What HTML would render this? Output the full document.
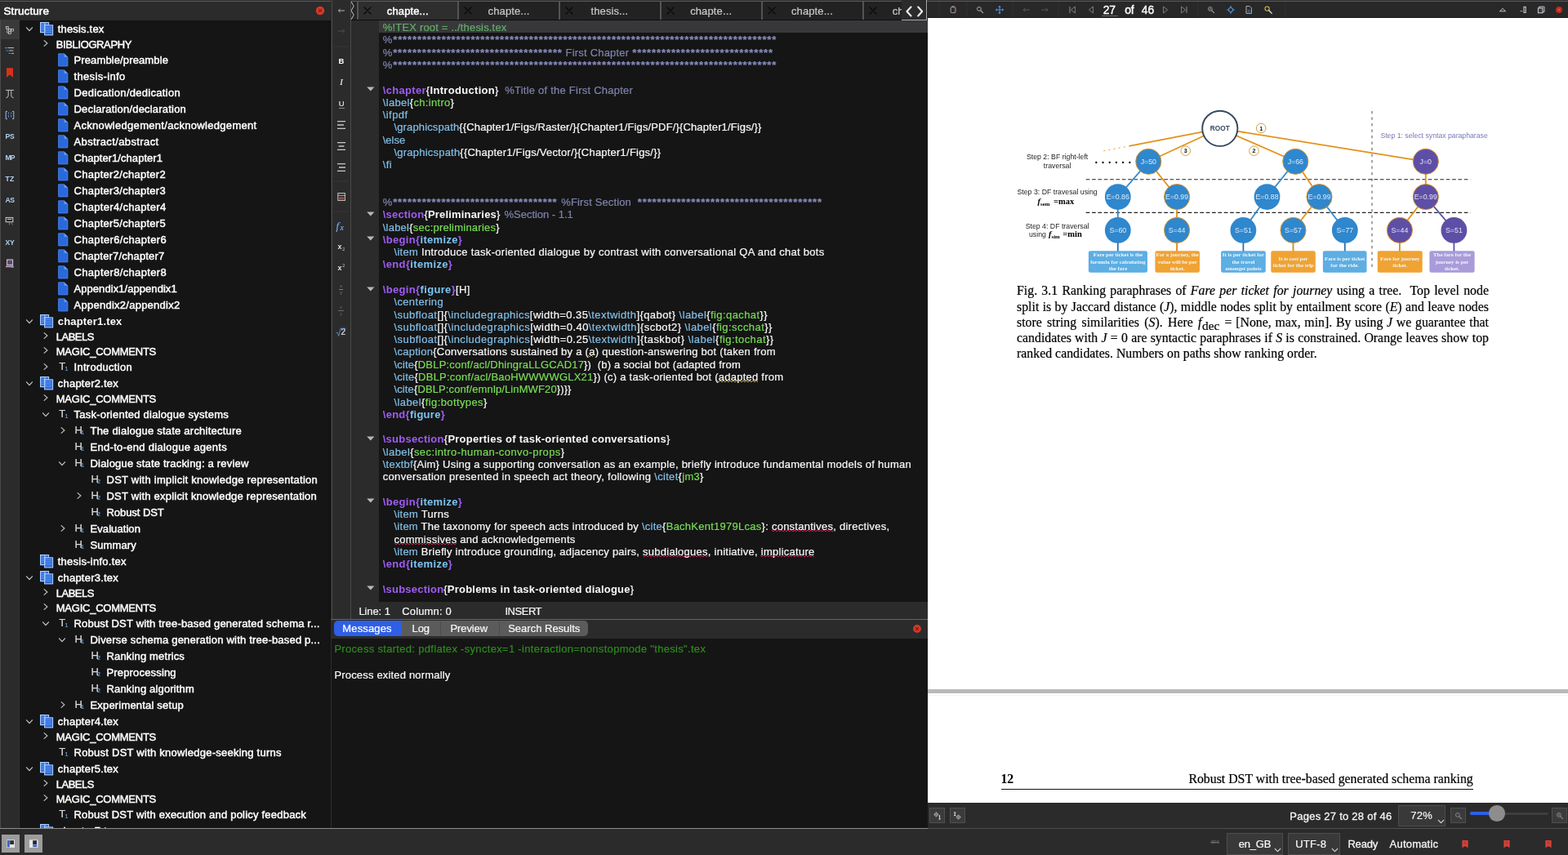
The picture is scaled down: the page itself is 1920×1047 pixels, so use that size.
<!DOCTYPE html>
<html lang="en"><head><meta charset="utf-8"><title>TeXstudio</title>
<style>
html,body{margin:0;padding:0;background:#2b2b2b;}
body{width:1920px;height:1047px;overflow:hidden;font-family:"Liberation Sans",sans-serif;font-size:13px;color:#ececec;}
#app{will-change:transform;position:relative;width:1920px;height:1047px;overflow:hidden;background:#2b2b2b;}
#app div,#app svg{position:absolute;box-sizing:border-box;}
.t{white-space:pre;color:#f8f8f8;-webkit-text-stroke:0.2px currentColor;}
.t span{position:static;}
.w{}
.wb,.b{font-weight:bold;-webkit-text-stroke:0;}
.dim{}
.mag{color:#62ad68;}
.com{color:#7e83ad;}
.kw{color:#9f5cf3;font-weight:bold;-webkit-text-stroke:0;}
.env{color:#7cc4f2;font-weight:bold;-webkit-text-stroke:0;}
.cmd{color:#82bfe8;}
.ref{color:#78dc55;}
.sqr{}
.sqy{}
.grn{color:#2d8c1d;}
.it{font-style:italic;}
.tb{font-weight:bold;}
.k{color:#000;}
.ksub{color:#141414;font-size:11.3px;position:relative !important;top:3.6px;}
.ast{color:#868bbd;font-weight:bold;}

</style></head>
<body>
<div id="app">
<div style="left:0px;top:1px;width:405px;height:23px;background:#2b2b2b;"></div>
<div class="t" style="left:4.50px;top:5.70px;line-height:16px;font-size:13.5px;letter-spacing:0.080px;color:#fff;-webkit-text-stroke:0.55px #fff;"><span class="w">Structure</span></div>
<svg style="left:386px;top:7px" width="12" height="12" viewBox="0 0 12 12"><circle cx="6" cy="6" r="5.2" fill="#d63a2c"/><path d="M4 4l4 4M8 4l-4 4" stroke="#8a1f16" stroke-width="1.2" fill="none"/></svg>
<div style="left:0px;top:24px;width:24px;height:990px;background:#2b2b2b;"></div>
<div style="left:1px;top:24px;width:23px;height:24px;background:#3a3a3a;"></div>
<div style="left:24px;top:25px;width:380.6px;height:989px;background:#151515;"></div>
<div style="left:402.8px;top:25px;width:1.8px;height:733px;background:#101010;"></div>
<div style="left:406px;top:1px;width:1px;height:757px;background:#4a4a4a;"></div>
<div style="left:407px;top:1px;width:22px;height:757px;background:#2b2b2b;"></div>
<div style="left:429px;top:1px;width:1px;height:757px;background:#4a4a4a;"></div>
<div style="left:430px;top:1px;width:706px;height:23px;background:#252525;"></div>
<div style="left:430px;top:24px;width:706px;height:1px;background:#0c0c0c;"></div>
<div style="left:430px;top:25px;width:34px;height:712px;background:#2b2b2b;"></div>
<div style="left:464px;top:25px;width:672px;height:712px;background:#151515;"></div>
<div style="left:464px;top:25px;width:672px;height:15.3px;background:#38383b;"></div>
<div style="left:430px;top:737px;width:706px;height:21px;background:#2b2b2b;"></div>
<div style="left:405px;top:758px;width:731px;height:1px;background:#666666;"></div>
<div style="left:405px;top:759px;width:731px;height:23px;background:#2b2b2b;"></div>
<div style="left:405px;top:782px;width:731px;height:232px;background:#151515;"></div>
<div style="left:404px;top:758px;width:1.2px;height:256px;background:#151515;"></div>
<div style="left:405.1px;top:782px;width:1.2px;height:232px;background:#2e2e2e;"></div>
<div style="left:1136px;top:2px;width:784px;height:20px;background:#282828;"></div>
<div style="left:1136px;top:20.6px;width:784px;height:1.4px;background:#1c1c1c;"></div>
<div style="left:1136px;top:22px;width:784px;height:961px;background:#ffffff;"></div>
<div style="left:1136px;top:844px;width:784px;height:5px;background:#b9b9b9;"></div>
<div style="left:1136px;top:851px;width:784px;height:1px;background:#f3f3f3;"></div>
<div style="left:1136px;top:983px;width:784px;height:31px;background:#2b2b2b;"></div>
<div style="left:0px;top:0px;width:1920px;height:1px;background:#2c2c2c;"></div>
<div style="left:0px;top:1px;width:405px;height:1px;background:#5c5c5c;"></div>
<div style="left:430px;top:1px;width:1490px;height:1px;background:#5c5c5c;"></div>
<div style="left:406px;top:0px;width:1px;height:2px;background:#4a4a4a;"></div>
<div style="left:0px;top:1014px;width:1920px;height:33px;background:#2b2b2b;"></div>
<div style="left:0px;top:1014px;width:1136px;height:1px;background:#8c8c8c;"></div>
<div style="left:1136px;top:1014px;width:784px;height:1px;background:#4e4e4e;"></div>
<div style="left:24px;top:25px;width:380px;height:989px;overflow:hidden"><div style="left:-24px;top:-25px;width:405px;height:1047px">
<svg style="left:29.799999999999997px;top:29.5px" width="12" height="12" viewBox="-6 -6 12 12"><path d="M-3.5 -2.2L0 1.6L3.5 -2.2" fill="none" stroke="#c4c4c4" stroke-width="1.25" stroke-linecap="round" stroke-linejoin="round"/></svg>
<svg style="left:48.6px;top:26.7px" width="17" height="17" viewBox="0 0 17 17"><rect x="0.6" y="0.6" width="10" height="12" fill="#2b67d9" stroke="#a9cdfc" stroke-width="1.1"/><path d="M2 3.5h7.5M2 5.5h7.5M2 7.5h7.5M2 9.5h7.5" stroke="#6aa0f0" stroke-width="0.8"/><rect x="5.6" y="3.9" width="10" height="12" fill="#2b67d9" stroke="#a9cdfc" stroke-width="1.1"/><path d="M7 6.5h7.4M7 8.5h7.4M7 10.5h7.4M7 12.5h7.4" stroke="#6aa0f0" stroke-width="0.8"/><rect x="0.6" y="0.6" width="5.3" height="12" fill="none" stroke="#a9cdfc" stroke-width="1.1"/></svg>
<div class="t" style="left:70.75px;top:25.60px;line-height:20px;font-size:13px;letter-spacing:0.183px;color:#fff;-webkit-text-stroke:0.45px #fff;"><span class="w">thesis.tex</span></div>
<svg style="left:50.2px;top:47.3px" width="12" height="12" viewBox="-6 -6 12 12"><path d="M-1.9 -3.4L1.9 0L-1.9 3.4" fill="none" stroke="#b8b8b8" stroke-width="1.25" stroke-linecap="round" stroke-linejoin="round"/></svg>
<div class="t" style="left:68.75px;top:45.60px;line-height:18px;font-size:13px;letter-spacing:-0.380px;color:#fff;-webkit-text-stroke:0.45px #fff;"><span class="w">BIBLIOGRAPHY</span></div>
<svg style="left:70.8px;top:64.8px" width="13" height="17" viewBox="0 0 13 17"><path d="M0.3 0.5H7.6L12.2 4.8V16.2H0.3Z" fill="#2a68db"/><path d="M7.6 0.5V4.8H12.2Z" fill="#6fa4f2"/><path d="M0.7 0.9H7.4L11.8 5V15.8H0.7Z" fill="none" stroke="#4b84e6" stroke-width="0.8"/></svg>
<div class="t" style="left:90.50px;top:63.60px;line-height:20px;font-size:13px;letter-spacing:0.120px;color:#fff;-webkit-text-stroke:0.45px #fff;"><span class="w">Preamble/preamble</span></div>
<svg style="left:70.8px;top:84.8px" width="13" height="17" viewBox="0 0 13 17"><path d="M0.3 0.5H7.6L12.2 4.8V16.2H0.3Z" fill="#2a68db"/><path d="M7.6 0.5V4.8H12.2Z" fill="#6fa4f2"/><path d="M0.7 0.9H7.4L11.8 5V15.8H0.7Z" fill="none" stroke="#4b84e6" stroke-width="0.8"/></svg>
<div class="t" style="left:90.50px;top:83.60px;line-height:20px;font-size:13px;letter-spacing:0.341px;color:#fff;-webkit-text-stroke:0.45px #fff;"><span class="w">thesis-info</span></div>
<svg style="left:70.8px;top:104.8px" width="13" height="17" viewBox="0 0 13 17"><path d="M0.3 0.5H7.6L12.2 4.8V16.2H0.3Z" fill="#2a68db"/><path d="M7.6 0.5V4.8H12.2Z" fill="#6fa4f2"/><path d="M0.7 0.9H7.4L11.8 5V15.8H0.7Z" fill="none" stroke="#4b84e6" stroke-width="0.8"/></svg>
<div class="t" style="left:90.50px;top:103.60px;line-height:20px;font-size:13px;letter-spacing:0.295px;color:#fff;-webkit-text-stroke:0.45px #fff;"><span class="w">Dedication/dedication</span></div>
<svg style="left:70.8px;top:124.8px" width="13" height="17" viewBox="0 0 13 17"><path d="M0.3 0.5H7.6L12.2 4.8V16.2H0.3Z" fill="#2a68db"/><path d="M7.6 0.5V4.8H12.2Z" fill="#6fa4f2"/><path d="M0.7 0.9H7.4L11.8 5V15.8H0.7Z" fill="none" stroke="#4b84e6" stroke-width="0.8"/></svg>
<div class="t" style="left:90.50px;top:123.60px;line-height:20px;font-size:13px;letter-spacing:0.197px;color:#fff;-webkit-text-stroke:0.45px #fff;"><span class="w">Declaration/declaration</span></div>
<svg style="left:70.8px;top:144.8px" width="13" height="17" viewBox="0 0 13 17"><path d="M0.3 0.5H7.6L12.2 4.8V16.2H0.3Z" fill="#2a68db"/><path d="M7.6 0.5V4.8H12.2Z" fill="#6fa4f2"/><path d="M0.7 0.9H7.4L11.8 5V15.8H0.7Z" fill="none" stroke="#4b84e6" stroke-width="0.8"/></svg>
<div class="t" style="left:90.50px;top:143.60px;line-height:20px;font-size:13px;letter-spacing:0.302px;color:#fff;-webkit-text-stroke:0.45px #fff;"><span class="w">Acknowledgement/acknowledgement</span></div>
<svg style="left:70.8px;top:164.8px" width="13" height="17" viewBox="0 0 13 17"><path d="M0.3 0.5H7.6L12.2 4.8V16.2H0.3Z" fill="#2a68db"/><path d="M7.6 0.5V4.8H12.2Z" fill="#6fa4f2"/><path d="M0.7 0.9H7.4L11.8 5V15.8H0.7Z" fill="none" stroke="#4b84e6" stroke-width="0.8"/></svg>
<div class="t" style="left:90.50px;top:163.60px;line-height:20px;font-size:13px;letter-spacing:0.380px;color:#fff;-webkit-text-stroke:0.45px #fff;"><span class="w">Abstract/abstract</span></div>
<svg style="left:70.8px;top:184.8px" width="13" height="17" viewBox="0 0 13 17"><path d="M0.3 0.5H7.6L12.2 4.8V16.2H0.3Z" fill="#2a68db"/><path d="M7.6 0.5V4.8H12.2Z" fill="#6fa4f2"/><path d="M0.7 0.9H7.4L11.8 5V15.8H0.7Z" fill="none" stroke="#4b84e6" stroke-width="0.8"/></svg>
<div class="t" style="left:90.50px;top:183.60px;line-height:20px;font-size:13px;letter-spacing:0.048px;color:#fff;-webkit-text-stroke:0.45px #fff;"><span class="w">Chapter1/chapter1</span></div>
<svg style="left:70.8px;top:204.8px" width="13" height="17" viewBox="0 0 13 17"><path d="M0.3 0.5H7.6L12.2 4.8V16.2H0.3Z" fill="#2a68db"/><path d="M7.6 0.5V4.8H12.2Z" fill="#6fa4f2"/><path d="M0.7 0.9H7.4L11.8 5V15.8H0.7Z" fill="none" stroke="#4b84e6" stroke-width="0.8"/></svg>
<div class="t" style="left:90.50px;top:203.60px;line-height:20px;font-size:13px;letter-spacing:0.283px;color:#fff;-webkit-text-stroke:0.45px #fff;"><span class="w">Chapter2/chapter2</span></div>
<svg style="left:70.8px;top:224.8px" width="13" height="17" viewBox="0 0 13 17"><path d="M0.3 0.5H7.6L12.2 4.8V16.2H0.3Z" fill="#2a68db"/><path d="M7.6 0.5V4.8H12.2Z" fill="#6fa4f2"/><path d="M0.7 0.9H7.4L11.8 5V15.8H0.7Z" fill="none" stroke="#4b84e6" stroke-width="0.8"/></svg>
<div class="t" style="left:90.50px;top:223.60px;line-height:20px;font-size:13px;letter-spacing:0.283px;color:#fff;-webkit-text-stroke:0.45px #fff;"><span class="w">Chapter3/chapter3</span></div>
<svg style="left:70.8px;top:244.8px" width="13" height="17" viewBox="0 0 13 17"><path d="M0.3 0.5H7.6L12.2 4.8V16.2H0.3Z" fill="#2a68db"/><path d="M7.6 0.5V4.8H12.2Z" fill="#6fa4f2"/><path d="M0.7 0.9H7.4L11.8 5V15.8H0.7Z" fill="none" stroke="#4b84e6" stroke-width="0.8"/></svg>
<div class="t" style="left:90.50px;top:243.60px;line-height:20px;font-size:13px;letter-spacing:0.312px;color:#fff;-webkit-text-stroke:0.45px #fff;"><span class="w">Chapter4/chapter4</span></div>
<svg style="left:70.8px;top:264.8px" width="13" height="17" viewBox="0 0 13 17"><path d="M0.3 0.5H7.6L12.2 4.8V16.2H0.3Z" fill="#2a68db"/><path d="M7.6 0.5V4.8H12.2Z" fill="#6fa4f2"/><path d="M0.7 0.9H7.4L11.8 5V15.8H0.7Z" fill="none" stroke="#4b84e6" stroke-width="0.8"/></svg>
<div class="t" style="left:90.50px;top:263.60px;line-height:20px;font-size:13px;letter-spacing:0.283px;color:#fff;-webkit-text-stroke:0.45px #fff;"><span class="w">Chapter5/chapter5</span></div>
<svg style="left:70.8px;top:284.8px" width="13" height="17" viewBox="0 0 13 17"><path d="M0.3 0.5H7.6L12.2 4.8V16.2H0.3Z" fill="#2a68db"/><path d="M7.6 0.5V4.8H12.2Z" fill="#6fa4f2"/><path d="M0.7 0.9H7.4L11.8 5V15.8H0.7Z" fill="none" stroke="#4b84e6" stroke-width="0.8"/></svg>
<div class="t" style="left:90.50px;top:283.60px;line-height:20px;font-size:13px;letter-spacing:0.342px;color:#fff;-webkit-text-stroke:0.45px #fff;"><span class="w">Chapter6/chapter6</span></div>
<svg style="left:70.8px;top:304.8px" width="13" height="17" viewBox="0 0 13 17"><path d="M0.3 0.5H7.6L12.2 4.8V16.2H0.3Z" fill="#2a68db"/><path d="M7.6 0.5V4.8H12.2Z" fill="#6fa4f2"/><path d="M0.7 0.9H7.4L11.8 5V15.8H0.7Z" fill="none" stroke="#4b84e6" stroke-width="0.8"/></svg>
<div class="t" style="left:90.50px;top:303.60px;line-height:20px;font-size:13px;letter-spacing:0.195px;color:#fff;-webkit-text-stroke:0.45px #fff;"><span class="w">Chapter7/chapter7</span></div>
<svg style="left:70.8px;top:324.8px" width="13" height="17" viewBox="0 0 13 17"><path d="M0.3 0.5H7.6L12.2 4.8V16.2H0.3Z" fill="#2a68db"/><path d="M7.6 0.5V4.8H12.2Z" fill="#6fa4f2"/><path d="M0.7 0.9H7.4L11.8 5V15.8H0.7Z" fill="none" stroke="#4b84e6" stroke-width="0.8"/></svg>
<div class="t" style="left:90.50px;top:323.60px;line-height:20px;font-size:13px;letter-spacing:0.342px;color:#fff;-webkit-text-stroke:0.45px #fff;"><span class="w">Chapter8/chapter8</span></div>
<svg style="left:70.8px;top:344.8px" width="13" height="17" viewBox="0 0 13 17"><path d="M0.3 0.5H7.6L12.2 4.8V16.2H0.3Z" fill="#2a68db"/><path d="M7.6 0.5V4.8H12.2Z" fill="#6fa4f2"/><path d="M0.7 0.9H7.4L11.8 5V15.8H0.7Z" fill="none" stroke="#4b84e6" stroke-width="0.8"/></svg>
<div class="t" style="left:90.50px;top:343.60px;line-height:20px;font-size:13px;letter-spacing:0.062px;color:#fff;-webkit-text-stroke:0.45px #fff;"><span class="w">Appendix1/appendix1</span></div>
<svg style="left:70.8px;top:364.8px" width="13" height="17" viewBox="0 0 13 17"><path d="M0.3 0.5H7.6L12.2 4.8V16.2H0.3Z" fill="#2a68db"/><path d="M7.6 0.5V4.8H12.2Z" fill="#6fa4f2"/><path d="M0.7 0.9H7.4L11.8 5V15.8H0.7Z" fill="none" stroke="#4b84e6" stroke-width="0.8"/></svg>
<div class="t" style="left:90.50px;top:363.60px;line-height:20px;font-size:13px;letter-spacing:0.260px;color:#fff;-webkit-text-stroke:0.45px #fff;"><span class="w">Appendix2/appendix2</span></div>
<svg style="left:29.799999999999997px;top:387.5px" width="12" height="12" viewBox="-6 -6 12 12"><path d="M-3.5 -2.2L0 1.6L3.5 -2.2" fill="none" stroke="#c4c4c4" stroke-width="1.25" stroke-linecap="round" stroke-linejoin="round"/></svg>
<svg style="left:48.6px;top:384.7px" width="17" height="17" viewBox="0 0 17 17"><rect x="0.6" y="0.6" width="10" height="12" fill="#2b67d9" stroke="#a9cdfc" stroke-width="1.1"/><path d="M2 3.5h7.5M2 5.5h7.5M2 7.5h7.5M2 9.5h7.5" stroke="#6aa0f0" stroke-width="0.8"/><rect x="5.6" y="3.9" width="10" height="12" fill="#2b67d9" stroke="#a9cdfc" stroke-width="1.1"/><path d="M7 6.5h7.4M7 8.5h7.4M7 10.5h7.4M7 12.5h7.4" stroke="#6aa0f0" stroke-width="0.8"/><rect x="0.6" y="0.6" width="5.3" height="12" fill="none" stroke="#a9cdfc" stroke-width="1.1"/></svg>
<div class="t" style="left:70.75px;top:383.60px;line-height:20px;font-size:13px;letter-spacing:0.180px;color:#fff;"><span class="wb">chapter1.tex</span></div>
<svg style="left:50.2px;top:405.3px" width="12" height="12" viewBox="-6 -6 12 12"><path d="M-1.9 -3.4L1.9 0L-1.9 3.4" fill="none" stroke="#b8b8b8" stroke-width="1.25" stroke-linecap="round" stroke-linejoin="round"/></svg>
<div class="t" style="left:68.75px;top:403.60px;line-height:18px;font-size:13px;letter-spacing:-0.484px;color:#fff;-webkit-text-stroke:0.45px #fff;"><span class="w">LABELS</span></div>
<svg style="left:50.2px;top:423.3px" width="12" height="12" viewBox="-6 -6 12 12"><path d="M-1.9 -3.4L1.9 0L-1.9 3.4" fill="none" stroke="#b8b8b8" stroke-width="1.25" stroke-linecap="round" stroke-linejoin="round"/></svg>
<div class="t" style="left:68.75px;top:421.60px;line-height:18px;font-size:13px;letter-spacing:-0.244px;color:#fff;-webkit-text-stroke:0.45px #fff;"><span class="w">MAGIC_COMMENTS</span></div>
<svg style="left:50.199999999999996px;top:443px" width="12" height="12" viewBox="-6 -6 12 12"><path d="M-1.9 -3.4L1.9 0L-1.9 3.4" fill="none" stroke="#b8b8b8" stroke-width="1.25" stroke-linecap="round" stroke-linejoin="round"/></svg>
<div class="t" style="left:72.20px;top:439.00px;line-height:20px;font-size:13px;color:#dcdcdc;"><span class="ic">T</span></div>
<div class="t" style="left:79.60px;top:447.20px;line-height:10px;font-size:7px;color:#6f9fd0;"><span class="ic">1</span></div>
<div class="t" style="left:90.50px;top:439.60px;line-height:20px;font-size:13px;letter-spacing:0.297px;color:#fff;-webkit-text-stroke:0.45px #fff;"><span class="w">Introduction</span></div>
<svg style="left:29.799999999999997px;top:463.5px" width="12" height="12" viewBox="-6 -6 12 12"><path d="M-3.5 -2.2L0 1.6L3.5 -2.2" fill="none" stroke="#c4c4c4" stroke-width="1.25" stroke-linecap="round" stroke-linejoin="round"/></svg>
<svg style="left:48.6px;top:460.7px" width="17" height="17" viewBox="0 0 17 17"><rect x="0.6" y="0.6" width="10" height="12" fill="#2b67d9" stroke="#a9cdfc" stroke-width="1.1"/><path d="M2 3.5h7.5M2 5.5h7.5M2 7.5h7.5M2 9.5h7.5" stroke="#6aa0f0" stroke-width="0.8"/><rect x="5.6" y="3.9" width="10" height="12" fill="#2b67d9" stroke="#a9cdfc" stroke-width="1.1"/><path d="M7 6.5h7.4M7 8.5h7.4M7 10.5h7.4M7 12.5h7.4" stroke="#6aa0f0" stroke-width="0.8"/><rect x="0.6" y="0.6" width="5.3" height="12" fill="none" stroke="#a9cdfc" stroke-width="1.1"/></svg>
<div class="t" style="left:70.75px;top:459.60px;line-height:20px;font-size:13px;letter-spacing:0.225px;color:#fff;-webkit-text-stroke:0.45px #fff;"><span class="w">chapter2.tex</span></div>
<svg style="left:50.2px;top:481.3px" width="12" height="12" viewBox="-6 -6 12 12"><path d="M-1.9 -3.4L1.9 0L-1.9 3.4" fill="none" stroke="#b8b8b8" stroke-width="1.25" stroke-linecap="round" stroke-linejoin="round"/></svg>
<div class="t" style="left:68.75px;top:479.60px;line-height:18px;font-size:13px;letter-spacing:-0.244px;color:#fff;-webkit-text-stroke:0.45px #fff;"><span class="w">MAGIC_COMMENTS</span></div>
<svg style="left:49.8px;top:501.5px" width="12" height="12" viewBox="-6 -6 12 12"><path d="M-3.5 -2.2L0 1.6L3.5 -2.2" fill="none" stroke="#c4c4c4" stroke-width="1.25" stroke-linecap="round" stroke-linejoin="round"/></svg>
<div class="t" style="left:72.20px;top:497.00px;line-height:20px;font-size:13px;color:#dcdcdc;"><span class="ic">T</span></div>
<div class="t" style="left:79.60px;top:505.20px;line-height:10px;font-size:7px;color:#6f9fd0;"><span class="ic">1</span></div>
<div class="t" style="left:90.50px;top:497.60px;line-height:20px;font-size:13px;letter-spacing:0.247px;color:#fff;-webkit-text-stroke:0.45px #fff;"><span class="w">Task-oriented dialogue systems</span></div>
<svg style="left:70.60000000000001px;top:521px" width="12" height="12" viewBox="-6 -6 12 12"><path d="M-1.9 -3.4L1.9 0L-1.9 3.4" fill="none" stroke="#b8b8b8" stroke-width="1.25" stroke-linecap="round" stroke-linejoin="round"/></svg>
<div class="t" style="left:91.60px;top:517.00px;line-height:20px;font-size:13px;color:#dcdcdc;"><span class="ic">H</span></div>
<div class="t" style="left:99.00px;top:525.20px;line-height:10px;font-size:7px;color:#6f9fd0;"><span class="ic">1</span></div>
<div class="t" style="left:110.50px;top:517.60px;line-height:20px;font-size:13px;letter-spacing:0.226px;color:#fff;-webkit-text-stroke:0.45px #fff;"><span class="w">The dialogue state architecture</span></div>
<div class="t" style="left:91.60px;top:537.00px;line-height:20px;font-size:13px;color:#dcdcdc;"><span class="ic">H</span></div>
<div class="t" style="left:99.00px;top:545.20px;line-height:10px;font-size:7px;color:#6f9fd0;"><span class="ic">1</span></div>
<div class="t" style="left:110.50px;top:537.60px;line-height:20px;font-size:13px;letter-spacing:0.299px;color:#fff;-webkit-text-stroke:0.45px #fff;"><span class="w">End-to-end dialogue agents</span></div>
<svg style="left:70.2px;top:561.5px" width="12" height="12" viewBox="-6 -6 12 12"><path d="M-3.5 -2.2L0 1.6L3.5 -2.2" fill="none" stroke="#c4c4c4" stroke-width="1.25" stroke-linecap="round" stroke-linejoin="round"/></svg>
<div class="t" style="left:91.60px;top:557.00px;line-height:20px;font-size:13px;color:#dcdcdc;"><span class="ic">H</span></div>
<div class="t" style="left:99.00px;top:565.20px;line-height:10px;font-size:7px;color:#6f9fd0;"><span class="ic">1</span></div>
<div class="t" style="left:110.50px;top:557.60px;line-height:20px;font-size:13px;letter-spacing:0.186px;color:#fff;-webkit-text-stroke:0.45px #fff;"><span class="w">Dialogue state tracking: a review</span></div>
<div class="t" style="left:111.60px;top:577.00px;line-height:20px;font-size:13px;color:#dcdcdc;"><span class="ic">H</span></div>
<div class="t" style="left:119.00px;top:585.20px;line-height:10px;font-size:7px;color:#6f9fd0;"><span class="ic">2</span></div>
<div class="t" style="left:130.50px;top:577.60px;line-height:20px;font-size:13px;letter-spacing:0.242px;color:#fff;-webkit-text-stroke:0.45px #fff;"><span class="w">DST with implicit knowledge representation</span></div>
<svg style="left:90.60000000000001px;top:601px" width="12" height="12" viewBox="-6 -6 12 12"><path d="M-1.9 -3.4L1.9 0L-1.9 3.4" fill="none" stroke="#b8b8b8" stroke-width="1.25" stroke-linecap="round" stroke-linejoin="round"/></svg>
<div class="t" style="left:111.60px;top:597.00px;line-height:20px;font-size:13px;color:#dcdcdc;"><span class="ic">H</span></div>
<div class="t" style="left:119.00px;top:605.20px;line-height:10px;font-size:7px;color:#6f9fd0;"><span class="ic">2</span></div>
<div class="t" style="left:130.50px;top:597.60px;line-height:20px;font-size:13px;letter-spacing:0.218px;color:#fff;-webkit-text-stroke:0.45px #fff;"><span class="w">DST with explicit knowledge representation</span></div>
<div class="t" style="left:111.60px;top:617.00px;line-height:20px;font-size:13px;color:#dcdcdc;"><span class="ic">H</span></div>
<div class="t" style="left:119.00px;top:625.20px;line-height:10px;font-size:7px;color:#6f9fd0;"><span class="ic">2</span></div>
<div class="t" style="left:130.50px;top:617.60px;line-height:20px;font-size:13px;letter-spacing:-0.056px;color:#fff;-webkit-text-stroke:0.45px #fff;"><span class="w">Robust DST</span></div>
<svg style="left:70.60000000000001px;top:641px" width="12" height="12" viewBox="-6 -6 12 12"><path d="M-1.9 -3.4L1.9 0L-1.9 3.4" fill="none" stroke="#b8b8b8" stroke-width="1.25" stroke-linecap="round" stroke-linejoin="round"/></svg>
<div class="t" style="left:91.60px;top:637.00px;line-height:20px;font-size:13px;color:#dcdcdc;"><span class="ic">H</span></div>
<div class="t" style="left:99.00px;top:645.20px;line-height:10px;font-size:7px;color:#6f9fd0;"><span class="ic">1</span></div>
<div class="t" style="left:110.50px;top:637.60px;line-height:20px;font-size:13px;letter-spacing:0.078px;color:#fff;-webkit-text-stroke:0.45px #fff;"><span class="w">Evaluation</span></div>
<div class="t" style="left:91.60px;top:657.00px;line-height:20px;font-size:13px;color:#dcdcdc;"><span class="ic">H</span></div>
<div class="t" style="left:99.00px;top:665.20px;line-height:10px;font-size:7px;color:#6f9fd0;"><span class="ic">1</span></div>
<div class="t" style="left:110.50px;top:657.60px;line-height:20px;font-size:13px;letter-spacing:0.089px;color:#fff;-webkit-text-stroke:0.45px #fff;"><span class="w">Summary</span></div>
<svg style="left:48.6px;top:678.7px" width="17" height="17" viewBox="0 0 17 17"><rect x="0.6" y="0.6" width="10" height="12" fill="#2b67d9" stroke="#a9cdfc" stroke-width="1.1"/><path d="M2 3.5h7.5M2 5.5h7.5M2 7.5h7.5M2 9.5h7.5" stroke="#6aa0f0" stroke-width="0.8"/><rect x="5.6" y="3.9" width="10" height="12" fill="#2b67d9" stroke="#a9cdfc" stroke-width="1.1"/><path d="M7 6.5h7.4M7 8.5h7.4M7 10.5h7.4M7 12.5h7.4" stroke="#6aa0f0" stroke-width="0.8"/><rect x="0.6" y="0.6" width="5.3" height="12" fill="none" stroke="#a9cdfc" stroke-width="1.1"/></svg>
<div class="t" style="left:70.75px;top:677.60px;line-height:20px;font-size:13px;letter-spacing:0.253px;color:#fff;-webkit-text-stroke:0.45px #fff;"><span class="w">thesis-info.tex</span></div>
<svg style="left:29.799999999999997px;top:701.5px" width="12" height="12" viewBox="-6 -6 12 12"><path d="M-3.5 -2.2L0 1.6L3.5 -2.2" fill="none" stroke="#c4c4c4" stroke-width="1.25" stroke-linecap="round" stroke-linejoin="round"/></svg>
<svg style="left:48.6px;top:698.7px" width="17" height="17" viewBox="0 0 17 17"><rect x="0.6" y="0.6" width="10" height="12" fill="#2b67d9" stroke="#a9cdfc" stroke-width="1.1"/><path d="M2 3.5h7.5M2 5.5h7.5M2 7.5h7.5M2 9.5h7.5" stroke="#6aa0f0" stroke-width="0.8"/><rect x="5.6" y="3.9" width="10" height="12" fill="#2b67d9" stroke="#a9cdfc" stroke-width="1.1"/><path d="M7 6.5h7.4M7 8.5h7.4M7 10.5h7.4M7 12.5h7.4" stroke="#6aa0f0" stroke-width="0.8"/><rect x="0.6" y="0.6" width="5.3" height="12" fill="none" stroke="#a9cdfc" stroke-width="1.1"/></svg>
<div class="t" style="left:70.75px;top:697.60px;line-height:20px;font-size:13px;letter-spacing:0.225px;color:#fff;-webkit-text-stroke:0.45px #fff;"><span class="w">chapter3.tex</span></div>
<svg style="left:50.2px;top:719.3px" width="12" height="12" viewBox="-6 -6 12 12"><path d="M-1.9 -3.4L1.9 0L-1.9 3.4" fill="none" stroke="#b8b8b8" stroke-width="1.25" stroke-linecap="round" stroke-linejoin="round"/></svg>
<div class="t" style="left:68.75px;top:717.60px;line-height:18px;font-size:13px;letter-spacing:-0.484px;color:#fff;-webkit-text-stroke:0.45px #fff;"><span class="w">LABELS</span></div>
<svg style="left:50.2px;top:737.3px" width="12" height="12" viewBox="-6 -6 12 12"><path d="M-1.9 -3.4L1.9 0L-1.9 3.4" fill="none" stroke="#b8b8b8" stroke-width="1.25" stroke-linecap="round" stroke-linejoin="round"/></svg>
<div class="t" style="left:68.75px;top:735.60px;line-height:18px;font-size:13px;letter-spacing:-0.244px;color:#fff;-webkit-text-stroke:0.45px #fff;"><span class="w">MAGIC_COMMENTS</span></div>
<svg style="left:49.8px;top:757.5px" width="12" height="12" viewBox="-6 -6 12 12"><path d="M-3.5 -2.2L0 1.6L3.5 -2.2" fill="none" stroke="#c4c4c4" stroke-width="1.25" stroke-linecap="round" stroke-linejoin="round"/></svg>
<div class="t" style="left:72.20px;top:753.00px;line-height:20px;font-size:13px;color:#dcdcdc;"><span class="ic">T</span></div>
<div class="t" style="left:79.60px;top:761.20px;line-height:10px;font-size:7px;color:#6f9fd0;"><span class="ic">1</span></div>
<div class="t" style="left:90.50px;top:753.60px;line-height:20px;font-size:13px;letter-spacing:0.179px;color:#fff;-webkit-text-stroke:0.45px #fff;"><span class="w">Robust DST with tree-based generated schema r...</span></div>
<svg style="left:70.2px;top:777.5px" width="12" height="12" viewBox="-6 -6 12 12"><path d="M-3.5 -2.2L0 1.6L3.5 -2.2" fill="none" stroke="#c4c4c4" stroke-width="1.25" stroke-linecap="round" stroke-linejoin="round"/></svg>
<div class="t" style="left:91.60px;top:773.00px;line-height:20px;font-size:13px;color:#dcdcdc;"><span class="ic">H</span></div>
<div class="t" style="left:99.00px;top:781.20px;line-height:10px;font-size:7px;color:#6f9fd0;"><span class="ic">1</span></div>
<div class="t" style="left:110.50px;top:773.60px;line-height:20px;font-size:13px;letter-spacing:0.197px;color:#fff;-webkit-text-stroke:0.45px #fff;"><span class="w">Diverse schema generation with tree-based p...</span></div>
<div class="t" style="left:111.60px;top:793.00px;line-height:20px;font-size:13px;color:#dcdcdc;"><span class="ic">H</span></div>
<div class="t" style="left:119.00px;top:801.20px;line-height:10px;font-size:7px;color:#6f9fd0;"><span class="ic">2</span></div>
<div class="t" style="left:130.50px;top:793.60px;line-height:20px;font-size:13px;letter-spacing:0.153px;color:#fff;-webkit-text-stroke:0.45px #fff;"><span class="w">Ranking metrics</span></div>
<div class="t" style="left:111.60px;top:813.00px;line-height:20px;font-size:13px;color:#dcdcdc;"><span class="ic">H</span></div>
<div class="t" style="left:119.00px;top:821.20px;line-height:10px;font-size:7px;color:#6f9fd0;"><span class="ic">2</span></div>
<div class="t" style="left:130.50px;top:813.60px;line-height:20px;font-size:13px;letter-spacing:0.165px;color:#fff;-webkit-text-stroke:0.45px #fff;"><span class="w">Preprocessing</span></div>
<div class="t" style="left:111.60px;top:833.00px;line-height:20px;font-size:13px;color:#dcdcdc;"><span class="ic">H</span></div>
<div class="t" style="left:119.00px;top:841.20px;line-height:10px;font-size:7px;color:#6f9fd0;"><span class="ic">2</span></div>
<div class="t" style="left:130.50px;top:833.60px;line-height:20px;font-size:13px;letter-spacing:0.160px;color:#fff;-webkit-text-stroke:0.45px #fff;"><span class="w">Ranking algorithm</span></div>
<svg style="left:70.60000000000001px;top:857px" width="12" height="12" viewBox="-6 -6 12 12"><path d="M-1.9 -3.4L1.9 0L-1.9 3.4" fill="none" stroke="#b8b8b8" stroke-width="1.25" stroke-linecap="round" stroke-linejoin="round"/></svg>
<div class="t" style="left:91.60px;top:853.00px;line-height:20px;font-size:13px;color:#dcdcdc;"><span class="ic">H</span></div>
<div class="t" style="left:99.00px;top:861.20px;line-height:10px;font-size:7px;color:#6f9fd0;"><span class="ic">1</span></div>
<div class="t" style="left:110.50px;top:853.60px;line-height:20px;font-size:13px;letter-spacing:0.179px;color:#fff;-webkit-text-stroke:0.45px #fff;"><span class="w">Experimental setup</span></div>
<svg style="left:29.799999999999997px;top:877.5px" width="12" height="12" viewBox="-6 -6 12 12"><path d="M-3.5 -2.2L0 1.6L3.5 -2.2" fill="none" stroke="#c4c4c4" stroke-width="1.25" stroke-linecap="round" stroke-linejoin="round"/></svg>
<svg style="left:48.6px;top:874.7px" width="17" height="17" viewBox="0 0 17 17"><rect x="0.6" y="0.6" width="10" height="12" fill="#2b67d9" stroke="#a9cdfc" stroke-width="1.1"/><path d="M2 3.5h7.5M2 5.5h7.5M2 7.5h7.5M2 9.5h7.5" stroke="#6aa0f0" stroke-width="0.8"/><rect x="5.6" y="3.9" width="10" height="12" fill="#2b67d9" stroke="#a9cdfc" stroke-width="1.1"/><path d="M7 6.5h7.4M7 8.5h7.4M7 10.5h7.4M7 12.5h7.4" stroke="#6aa0f0" stroke-width="0.8"/><rect x="0.6" y="0.6" width="5.3" height="12" fill="none" stroke="#a9cdfc" stroke-width="1.1"/></svg>
<div class="t" style="left:70.75px;top:873.60px;line-height:20px;font-size:13px;letter-spacing:0.225px;color:#fff;-webkit-text-stroke:0.45px #fff;"><span class="w">chapter4.tex</span></div>
<svg style="left:50.2px;top:895.3px" width="12" height="12" viewBox="-6 -6 12 12"><path d="M-1.9 -3.4L1.9 0L-1.9 3.4" fill="none" stroke="#b8b8b8" stroke-width="1.25" stroke-linecap="round" stroke-linejoin="round"/></svg>
<div class="t" style="left:68.75px;top:893.60px;line-height:18px;font-size:13px;letter-spacing:-0.244px;color:#fff;-webkit-text-stroke:0.45px #fff;"><span class="w">MAGIC_COMMENTS</span></div>
<div class="t" style="left:72.20px;top:911.00px;line-height:20px;font-size:13px;color:#dcdcdc;"><span class="ic">T</span></div>
<div class="t" style="left:79.60px;top:919.20px;line-height:10px;font-size:7px;color:#6f9fd0;"><span class="ic">1</span></div>
<div class="t" style="left:90.50px;top:911.60px;line-height:20px;font-size:13px;letter-spacing:0.244px;color:#fff;-webkit-text-stroke:0.45px #fff;"><span class="w">Robust DST with knowledge-seeking turns</span></div>
<svg style="left:29.799999999999997px;top:935.5px" width="12" height="12" viewBox="-6 -6 12 12"><path d="M-3.5 -2.2L0 1.6L3.5 -2.2" fill="none" stroke="#c4c4c4" stroke-width="1.25" stroke-linecap="round" stroke-linejoin="round"/></svg>
<svg style="left:48.6px;top:932.7px" width="17" height="17" viewBox="0 0 17 17"><rect x="0.6" y="0.6" width="10" height="12" fill="#2b67d9" stroke="#a9cdfc" stroke-width="1.1"/><path d="M2 3.5h7.5M2 5.5h7.5M2 7.5h7.5M2 9.5h7.5" stroke="#6aa0f0" stroke-width="0.8"/><rect x="5.6" y="3.9" width="10" height="12" fill="#2b67d9" stroke="#a9cdfc" stroke-width="1.1"/><path d="M7 6.5h7.4M7 8.5h7.4M7 10.5h7.4M7 12.5h7.4" stroke="#6aa0f0" stroke-width="0.8"/><rect x="0.6" y="0.6" width="5.3" height="12" fill="none" stroke="#a9cdfc" stroke-width="1.1"/></svg>
<div class="t" style="left:70.75px;top:931.60px;line-height:20px;font-size:13px;letter-spacing:0.225px;color:#fff;-webkit-text-stroke:0.45px #fff;"><span class="w">chapter5.tex</span></div>
<svg style="left:50.2px;top:953.3px" width="12" height="12" viewBox="-6 -6 12 12"><path d="M-1.9 -3.4L1.9 0L-1.9 3.4" fill="none" stroke="#b8b8b8" stroke-width="1.25" stroke-linecap="round" stroke-linejoin="round"/></svg>
<div class="t" style="left:68.75px;top:951.60px;line-height:18px;font-size:13px;letter-spacing:-0.484px;color:#fff;-webkit-text-stroke:0.45px #fff;"><span class="w">LABELS</span></div>
<svg style="left:50.2px;top:971.3px" width="12" height="12" viewBox="-6 -6 12 12"><path d="M-1.9 -3.4L1.9 0L-1.9 3.4" fill="none" stroke="#b8b8b8" stroke-width="1.25" stroke-linecap="round" stroke-linejoin="round"/></svg>
<div class="t" style="left:68.75px;top:969.60px;line-height:18px;font-size:13px;letter-spacing:-0.244px;color:#fff;-webkit-text-stroke:0.45px #fff;"><span class="w">MAGIC_COMMENTS</span></div>
<div class="t" style="left:72.20px;top:987.00px;line-height:20px;font-size:13px;color:#dcdcdc;"><span class="ic">T</span></div>
<div class="t" style="left:79.60px;top:995.20px;line-height:10px;font-size:7px;color:#6f9fd0;"><span class="ic">1</span></div>
<div class="t" style="left:90.50px;top:987.60px;line-height:20px;font-size:13px;letter-spacing:0.209px;color:#fff;-webkit-text-stroke:0.45px #fff;"><span class="w">Robust DST with execution and policy feedback</span></div>
<svg style="left:29.799999999999997px;top:1011.5px" width="12" height="12" viewBox="-6 -6 12 12"><path d="M-3.5 -2.2L0 1.6L3.5 -2.2" fill="none" stroke="#c4c4c4" stroke-width="1.25" stroke-linecap="round" stroke-linejoin="round"/></svg>
<svg style="left:48.6px;top:1008.7px" width="17" height="17" viewBox="0 0 17 17"><rect x="0.6" y="0.6" width="10" height="12" fill="#2b67d9" stroke="#a9cdfc" stroke-width="1.1"/><path d="M2 3.5h7.5M2 5.5h7.5M2 7.5h7.5M2 9.5h7.5" stroke="#6aa0f0" stroke-width="0.8"/><rect x="5.6" y="3.9" width="10" height="12" fill="#2b67d9" stroke="#a9cdfc" stroke-width="1.1"/><path d="M7 6.5h7.4M7 8.5h7.4M7 10.5h7.4M7 12.5h7.4" stroke="#6aa0f0" stroke-width="0.8"/><rect x="0.6" y="0.6" width="5.3" height="12" fill="none" stroke="#a9cdfc" stroke-width="1.1"/></svg>
<div class="t" style="left:70.75px;top:1007.60px;line-height:20px;font-size:13px;letter-spacing:0.225px;color:#fff;-webkit-text-stroke:0.45px #fff;"><span class="w">chapter7.tex</span></div>
</div></div>
<div class="t" style="left:468.75px;top:26.20px;line-height:16px;font-size:13px;letter-spacing:0.181px;"><span class="mag">%!TEX root = ../thesis.tex</span></div>
<div class="t" style="left:468.75px;top:41.48px;line-height:16px;font-size:13px;letter-spacing:0.891px;"><span class="com">%</span><span class="ast">*******************************************************************************</span></div>
<div class="t" style="left:468.75px;top:56.76px;line-height:16px;font-size:13px;letter-spacing:0.871px;"><span class="com">%</span><span class="ast">***********************************</span></div>
<div class="t" style="left:692.60px;top:56.76px;line-height:16px;font-size:13px;letter-spacing:0.197px;"><span class="com">First Chapter</span></div>
<div class="t" style="left:774.25px;top:56.76px;line-height:16px;font-size:13px;letter-spacing:0.898px;"><span class="ast">*****************************</span></div>
<div class="t" style="left:468.75px;top:72.03px;line-height:16px;font-size:13px;letter-spacing:0.891px;"><span class="com">%</span><span class="ast">*******************************************************************************</span></div>
<div class="t" style="left:468.75px;top:102.59px;line-height:16px;font-size:13px;letter-spacing:0.314px;"><span class="kw">\chapter</span><span class="w">{</span><span class="b">Introduction</span><span class="w">}</span></div>
<div class="t" style="left:618.25px;top:102.59px;line-height:16px;font-size:13px;letter-spacing:0.231px;"><span class="com">%Title of the First Chapter</span></div>
<div class="t" style="left:468.75px;top:117.87px;line-height:16px;font-size:13px;letter-spacing:0.318px;"><span class="cmd">\label</span><span class="w">{</span><span class="ref">ch:intro</span><span class="w">}</span></div>
<div class="t" style="left:468.75px;top:133.15px;line-height:16px;font-size:13px;letter-spacing:0.427px;"><span class="cmd">\ifpdf</span></div>
<div class="t" style="left:482.50px;top:148.42px;line-height:16px;font-size:13px;letter-spacing:0.134px;"><span class="cmd">\graphicspath</span><span class="w">{{Chapter1/Figs/Raster/}{Chapter1/Figs/PDF/}{Chapter1/Figs/}}</span></div>
<div class="t" style="left:468.75px;top:163.70px;line-height:16px;font-size:13px;letter-spacing:0.006px;"><span class="cmd">\else</span></div>
<div class="t" style="left:482.50px;top:178.98px;line-height:16px;font-size:13px;letter-spacing:0.216px;"><span class="cmd">\graphicspath</span><span class="w">{{Chapter1/Figs/Vector/}{Chapter1/Figs/}}</span></div>
<div class="t" style="left:468.75px;top:194.26px;line-height:16px;font-size:13px;letter-spacing:0.375px;"><span class="cmd">\fi</span></div>
<div class="t" style="left:468.75px;top:240.09px;line-height:16px;font-size:13px;letter-spacing:0.862px;"><span class="com">%</span><span class="ast">**********************************</span></div>
<div class="t" style="left:687.30px;top:240.09px;line-height:16px;font-size:13px;letter-spacing:0.135px;"><span class="com">%First Section</span></div>
<div class="t" style="left:780.75px;top:240.09px;line-height:16px;font-size:13px;letter-spacing:0.895px;"><span class="ast">**************************************</span></div>
<div class="t" style="left:468.75px;top:255.37px;line-height:16px;font-size:13px;letter-spacing:0.186px;"><span class="kw">\section</span><span class="w">{</span><span class="b">Preliminaries</span><span class="w">}</span></div>
<div class="t" style="left:617.50px;top:255.37px;line-height:16px;font-size:13px;letter-spacing:-0.021px;"><span class="com">%Section - 1.1</span></div>
<div class="t" style="left:468.75px;top:270.65px;line-height:16px;font-size:13px;letter-spacing:0.228px;"><span class="cmd">\label</span><span class="w">{</span><span class="ref">sec:preliminaries</span><span class="w">}</span></div>
<div class="t" style="left:468.75px;top:285.93px;line-height:16px;font-size:13px;letter-spacing:0.334px;"><span class="kw">\begin{</span><span class="env">itemize</span><span class="kw">}</span></div>
<div class="t" style="left:482.50px;top:301.20px;line-height:16px;font-size:13px;letter-spacing:0.285px;"><span class="cmd">\item</span><span class="w"> Introduce task-oriented dialogue by contrast with conversational QA and chat bots</span></div>
<div class="t" style="left:468.75px;top:316.48px;line-height:16px;font-size:13px;letter-spacing:0.351px;"><span class="kw">\end{</span><span class="env">itemize</span><span class="kw">}</span></div>
<div class="t" style="left:468.75px;top:347.04px;line-height:16px;font-size:13px;letter-spacing:0.344px;"><span class="kw">\begin{</span><span class="env">figure</span><span class="kw">}</span><span class="w">[H]</span></div>
<div class="t" style="left:482.50px;top:362.32px;line-height:16px;font-size:13px;letter-spacing:0.341px;"><span class="cmd">\centering</span></div>
<div class="t" style="left:482.50px;top:377.59px;line-height:16px;font-size:13px;letter-spacing:0.417px;"><span class="cmd">\subfloat</span><span class="w">[]{</span><span class="cmd">\includegraphics</span><span class="w">[width=0.35</span><span class="cmd">\textwidth</span><span class="w">]{qabot} </span><span class="cmd">\label</span><span class="w">{</span><span class="ref">fig:qachat</span><span class="w">}}</span></div>
<div class="t" style="left:482.50px;top:392.87px;line-height:16px;font-size:13px;letter-spacing:0.430px;"><span class="cmd">\subfloat</span><span class="w">[]{</span><span class="cmd">\includegraphics</span><span class="w">[width=0.40</span><span class="cmd">\textwidth</span><span class="w">]{scbot2} </span><span class="cmd">\label</span><span class="w">{</span><span class="ref">fig:scchat</span><span class="w">}}</span></div>
<div class="t" style="left:482.50px;top:408.15px;line-height:16px;font-size:13px;letter-spacing:0.428px;"><span class="cmd">\subfloat</span><span class="w">[]{</span><span class="cmd">\includegraphics</span><span class="w">[width=0.25</span><span class="cmd">\textwidth</span><span class="w">]{taskbot} </span><span class="cmd">\label</span><span class="w">{</span><span class="ref">fig:tochat</span><span class="w">}}</span></div>
<div class="t" style="left:482.50px;top:423.43px;line-height:16px;font-size:13px;letter-spacing:0.265px;"><span class="cmd">\caption</span><span class="w">{Conversations sustained by a (</span><span class="w sqy">a</span><span class="w">) question-answering bot (taken from</span></div>
<div class="t" style="left:482.50px;top:438.71px;line-height:16px;font-size:13px;letter-spacing:0.183px;"><span class="cmd">\cite</span><span class="w">{</span><span class="ref">DBLP:conf/acl/DhingraLLGCAD17</span><span class="w">})  (b) a social bot (adapted from</span></div>
<div class="t" style="left:482.50px;top:453.98px;line-height:16px;font-size:13px;letter-spacing:0.236px;"><span class="cmd">\cite</span><span class="w">{</span><span class="ref">DBLP:conf/acl/BaoHWWWWGLX21</span><span class="w">}) (c) a task-oriented bot (</span><span class="w sqy">adapted</span><span class="w"> from</span></div>
<div class="t" style="left:482.50px;top:469.26px;line-height:16px;font-size:13px;letter-spacing:0.113px;"><span class="cmd">\cite</span><span class="w">{</span><span class="ref">DBLP:conf/emnlp/LinMWF20</span><span class="w">})}}</span></div>
<div class="t" style="left:482.50px;top:484.54px;line-height:16px;font-size:13px;letter-spacing:0.399px;"><span class="cmd">\label</span><span class="w">{</span><span class="ref">fig:bottypes</span><span class="w">}</span></div>
<div class="t" style="left:468.75px;top:499.82px;line-height:16px;font-size:13px;letter-spacing:0.272px;"><span class="kw">\end{</span><span class="env">figure</span><span class="kw">}</span></div>
<div class="t" style="left:468.75px;top:530.37px;line-height:16px;font-size:13px;letter-spacing:0.252px;"><span class="kw">\subsection</span><span class="w">{</span><span class="b">Properties of task-oriented conversations</span><span class="w">}</span></div>
<div class="t" style="left:468.75px;top:545.65px;line-height:16px;font-size:13px;letter-spacing:0.397px;"><span class="cmd">\label</span><span class="w">{</span><span class="ref">sec:intro-human-convo-props</span><span class="w">}</span></div>
<div class="t" style="left:468.75px;top:560.93px;line-height:16px;font-size:13px;letter-spacing:0.245px;"><span class="cmd">\textbf</span><span class="w">{Aim} Using a supporting conversation as an example, briefly introduce fundamental models of human</span></div>
<div class="t" style="left:468.75px;top:576.21px;line-height:16px;font-size:13px;letter-spacing:0.308px;"><span class="w">conversation presented in speech act theory, following </span><span class="cmd">\citet</span><span class="w">{</span><span class="ref">jm3</span><span class="w">}</span></div>
<div class="t" style="left:468.75px;top:606.76px;line-height:16px;font-size:13px;letter-spacing:0.334px;"><span class="kw">\begin{</span><span class="env">itemize</span><span class="kw">}</span></div>
<div class="t" style="left:482.50px;top:622.04px;line-height:16px;font-size:13px;letter-spacing:0.291px;"><span class="cmd">\item</span><span class="w"> Turns</span></div>
<div class="t" style="left:482.50px;top:637.32px;line-height:16px;font-size:13px;letter-spacing:0.255px;"><span class="cmd">\item</span><span class="w"> The taxonomy for speech acts introduced by </span><span class="cmd">\cite</span><span class="w">{</span><span class="ref">BachKent1979Lcas</span><span class="w">}: </span><span class="w sqr">constantives</span><span class="w">, directives,</span></div>
<div class="t" style="left:482.50px;top:652.60px;line-height:16px;font-size:13px;letter-spacing:0.231px;"><span class="w sqr">commissives</span><span class="w"> and acknowledgements</span></div>
<div class="t" style="left:482.50px;top:667.88px;line-height:16px;font-size:13px;letter-spacing:0.257px;"><span class="cmd">\item</span><span class="w"> Briefly introduce grounding, adjacency pairs, </span><span class="w sqr">subdialogues</span><span class="w">, initiative, </span><span class="w sqr">implicature</span></div>
<div class="t" style="left:468.75px;top:683.15px;line-height:16px;font-size:13px;letter-spacing:0.351px;"><span class="kw">\end{</span><span class="env">itemize</span><span class="kw">}</span></div>
<div class="t" style="left:468.75px;top:713.71px;line-height:16px;font-size:13px;letter-spacing:0.209px;"><span class="kw">\subsection</span><span class="w">{</span><span class="b">Problems in task-oriented dialogue</span><span class="w">}</span></div>
<svg style="left:448px;top:105.09px" width="12" height="8" viewBox="0 0 12 8"><path d="M1.2 1.6H10.4L5.8 6.6Z" fill="#b9b9b9"/></svg>
<svg style="left:448px;top:257.87px" width="12" height="8" viewBox="0 0 12 8"><path d="M1.2 1.6H10.4L5.8 6.6Z" fill="#b9b9b9"/></svg>
<svg style="left:448px;top:288.43px" width="12" height="8" viewBox="0 0 12 8"><path d="M1.2 1.6H10.4L5.8 6.6Z" fill="#b9b9b9"/></svg>
<svg style="left:448px;top:349.54px" width="12" height="8" viewBox="0 0 12 8"><path d="M1.2 1.6H10.4L5.8 6.6Z" fill="#b9b9b9"/></svg>
<svg style="left:448px;top:532.87px" width="12" height="8" viewBox="0 0 12 8"><path d="M1.2 1.6H10.4L5.8 6.6Z" fill="#b9b9b9"/></svg>
<svg style="left:448px;top:609.26px" width="12" height="8" viewBox="0 0 12 8"><path d="M1.2 1.6H10.4L5.8 6.6Z" fill="#b9b9b9"/></svg>
<svg style="left:448px;top:716.21px" width="12" height="8" viewBox="0 0 12 8"><path d="M1.2 1.6H10.4L5.8 6.6Z" fill="#b9b9b9"/></svg>
<div class="t" style="left:439.40px;top:740.90px;line-height:16px;font-size:13px;letter-spacing:-0.092px;"><span class="w">Line: 1</span></div>
<div class="t" style="left:492.30px;top:740.90px;line-height:16px;font-size:13px;letter-spacing:0.139px;"><span class="w">Column: 0</span></div>
<div class="t" style="left:618.50px;top:740.90px;line-height:16px;font-size:13px;letter-spacing:-0.490px;"><span class="w">INSERT</span></div>
<div style="left:430px;top:1px;width:674px;height:23px;overflow:hidden"><div style="left:-430px;top:-1px;width:1136px;height:24px">
<div style="left:437.4px;top:2px;width:124px;height:22px;background:#2e2e2e;"></div>
<div style="left:436.59999999999997px;top:2px;width:2px;height:22px;background:#545454;"></div>
<svg style="left:444.6px;top:7.800000000000001px" width="10" height="10" viewBox="-5 -5 10 10"><path d="M-4 -4L4 4M4 -4L-4 4" stroke="#0a0a0a" stroke-width="1.4" stroke-linecap="round"/></svg>
<div class="t" style="left:473.80px;top:6.30px;line-height:16px;font-size:13px;letter-spacing:0.125px;color:#fff;-webkit-text-stroke:0.45px #fff;"><span class="w">chapte...</span></div>
<div style="left:561.18px;top:2px;width:124px;height:22px;background:#222222;"></div>
<div style="left:560.38px;top:2px;width:2px;height:22px;background:#545454;"></div>
<svg style="left:568.4px;top:7.800000000000001px" width="10" height="10" viewBox="-5 -5 10 10"><path d="M-4 -4L4 4M4 -4L-4 4" stroke="#0a0a0a" stroke-width="1.4" stroke-linecap="round"/></svg>
<div class="t" style="left:597.58px;top:6.30px;line-height:16px;font-size:13px;letter-spacing:0.125px;color:#c9c9c9;"><span class="w">chapte...</span></div>
<div style="left:684.96px;top:2px;width:124px;height:22px;background:#222222;"></div>
<div style="left:684.1600000000001px;top:2px;width:2px;height:22px;background:#545454;"></div>
<svg style="left:692.2px;top:7.800000000000001px" width="10" height="10" viewBox="-5 -5 10 10"><path d="M-4 -4L4 4M4 -4L-4 4" stroke="#0a0a0a" stroke-width="1.4" stroke-linecap="round"/></svg>
<div class="t" style="left:723.56px;top:6.30px;line-height:16px;font-size:13px;letter-spacing:0.089px;color:#c9c9c9;"><span class="w">thesis...</span></div>
<div style="left:808.74px;top:2px;width:124px;height:22px;background:#222222;"></div>
<div style="left:807.94px;top:2px;width:2px;height:22px;background:#545454;"></div>
<svg style="left:815.9px;top:7.800000000000001px" width="10" height="10" viewBox="-5 -5 10 10"><path d="M-4 -4L4 4M4 -4L-4 4" stroke="#0a0a0a" stroke-width="1.4" stroke-linecap="round"/></svg>
<div class="t" style="left:845.14px;top:6.30px;line-height:16px;font-size:13px;letter-spacing:0.125px;color:#c9c9c9;"><span class="w">chapte...</span></div>
<div style="left:932.52px;top:2px;width:124px;height:22px;background:#222222;"></div>
<div style="left:931.72px;top:2px;width:2px;height:22px;background:#545454;"></div>
<svg style="left:939.7px;top:7.800000000000001px" width="10" height="10" viewBox="-5 -5 10 10"><path d="M-4 -4L4 4M4 -4L-4 4" stroke="#0a0a0a" stroke-width="1.4" stroke-linecap="round"/></svg>
<div class="t" style="left:968.92px;top:6.30px;line-height:16px;font-size:13px;letter-spacing:0.125px;color:#c9c9c9;"><span class="w">chapte...</span></div>
<div style="left:1056.3px;top:2px;width:124px;height:22px;background:#222222;"></div>
<div style="left:1055.5px;top:2px;width:2px;height:22px;background:#545454;"></div>
<svg style="left:1063.5px;top:7.800000000000001px" width="10" height="10" viewBox="-5 -5 10 10"><path d="M-4 -4L4 4M4 -4L-4 4" stroke="#0a0a0a" stroke-width="1.4" stroke-linecap="round"/></svg>
<div class="t" style="left:1092.70px;top:6.30px;line-height:16px;font-size:13px;letter-spacing:0.125px;color:#c9c9c9;"><span class="w">chapte...</span></div>
</div></div>
<svg style="left:430px;top:1px" width="7" height="23" viewBox="0 0 7 23"><path d="M0 1L3.2 6.6L0 12L3.2 17.2L0 23" fill="none" stroke="#c4c4c4" stroke-width="1"/></svg>
<div style="left:1104px;top:0px;width:31px;height:25px;background:#2b2b2b;border-right:1px solid #a8a8a8;border-bottom:1px solid #a8a8a8;"></div>
<svg style="left:1104px;top:2px" width="31" height="22" viewBox="0 0 31 22"><path d="M11.5 6.5L6.5 12L11.5 17.5M20.2 6.5L25.2 12L20.2 17.5" fill="none" stroke="#f0f0f0" stroke-width="2.1" stroke-linecap="round" stroke-linejoin="round"/></svg>
<div style="left:409.4px;top:759.6px;width:83px;height:19.6px;background:#2f5fe6;border-radius:5px 0 0 5px;"></div>
<div style="left:492.4px;top:759.6px;width:227.4px;height:19.6px;background:#5b5b5b;border-radius:0 5px 5px 0;"></div>
<div style="left:538.6px;top:761px;width:1px;height:17px;background:#4c4c4c;"></div>
<div style="left:611px;top:761px;width:1px;height:17px;background:#4c4c4c;"></div>
<div class="t" style="left:419.30px;top:761.50px;line-height:16px;font-size:13px;letter-spacing:0.144px;color:#fff;"><span class="w">Messages</span></div>
<div class="t" style="left:504.50px;top:761.50px;line-height:16px;font-size:13px;letter-spacing:-0.068px;"><span class="w">Log</span></div>
<div class="t" style="left:551.50px;top:761.50px;line-height:16px;font-size:13px;letter-spacing:-0.107px;"><span class="w">Preview</span></div>
<div class="t" style="left:622.20px;top:761.50px;line-height:16px;font-size:13px;"><span class="w">Search Results</span></div>
<svg style="left:1117px;top:764px" width="12" height="12" viewBox="0 0 12 12"><circle cx="6" cy="6" r="4.9" fill="#d0392b"/><path d="M4.2 4.2l3.6 3.6M7.8 4.2l-3.6 3.6" stroke="#7a1a12" stroke-width="1.1" fill="none"/></svg>
<div class="t" style="left:409.40px;top:786.60px;line-height:16px;font-size:13px;letter-spacing:0.309px;"><span class="grn">Process started: pdflatex -synctex=1 -interaction=nonstopmode &quot;thesis&quot;.tex</span></div>
<div class="t" style="left:409.40px;top:818.60px;line-height:16px;font-size:13px;letter-spacing:0.178px;"><span class="w">Process exited normally</span></div>
<svg style="left:1236px;top:130px" width="600" height="210" viewBox="1236 130 600 210"><path d="M1329.7 219.8H1800.4M1329.7 260.4H1800.4" stroke="#222" stroke-width="1.1" stroke-dasharray="4.7 2.65" fill="none"/><path d="M1680 136V329" stroke="#2e2e2e" stroke-width="0.85" stroke-dasharray="3.3 4.2" fill="none"/><line x1="1493.8" y1="157.3" x2="1382.4" y2="178.8" stroke="#e2921c" stroke-width="1.8"/><path d="M1377.2 179.8L1348 185.4" stroke="#e2921c" stroke-width="1.2" stroke-dasharray="1 5.2" stroke-linecap="round" fill="none" opacity="0.8"/><line x1="1493.8" y1="157.3" x2="1406.3" y2="197.8" stroke="#e2921c" stroke-width="1.8"/><line x1="1493.8" y1="157.3" x2="1586.3" y2="197.8" stroke="#e2921c" stroke-width="1.8"/><line x1="1493.8" y1="157.3" x2="1745.8" y2="197.8" stroke="#e2921c" stroke-width="1.8"/><line x1="1406.3" y1="197.8" x2="1368.8" y2="241.1" stroke="#3a8ccc" stroke-width="1.8"/><line x1="1406.3" y1="197.8" x2="1441.1" y2="241.1" stroke="#e2921c" stroke-width="1.8"/><line x1="1368.8" y1="241.1" x2="1368.8" y2="281.9" stroke="#3a8ccc" stroke-width="1.8"/><line x1="1441.1" y1="241.1" x2="1441.1" y2="281.9" stroke="#e2921c" stroke-width="1.8"/><line x1="1586.3" y1="197.8" x2="1551.5" y2="241.1" stroke="#3a8ccc" stroke-width="1.8"/><line x1="1586.3" y1="197.8" x2="1615.5" y2="241.1" stroke="#e2921c" stroke-width="1.8"/><line x1="1551.5" y1="241.1" x2="1522.4" y2="281.9" stroke="#3a8ccc" stroke-width="1.8"/><line x1="1615.5" y1="241.1" x2="1583.5" y2="281.9" stroke="#e2921c" stroke-width="1.8"/><line x1="1615.5" y1="241.1" x2="1646.8" y2="281.9" stroke="#3a8ccc" stroke-width="1.8"/><line x1="1745.8" y1="197.8" x2="1745.8" y2="241.1" stroke="#e2921c" stroke-width="1.8"/><line x1="1745.8" y1="241.1" x2="1713.9" y2="281.9" stroke="#e2921c" stroke-width="1.8"/><line x1="1745.8" y1="241.1" x2="1780.4" y2="281.9" stroke="#5d4fa6" stroke-width="1.8"/><line x1="1368.8" y1="281.9" x2="1368.8" y2="308" stroke="#2f6fa8" stroke-width="1.8"/><line x1="1441.1" y1="281.9" x2="1441.1" y2="308" stroke="#d98a10" stroke-width="1.8"/><line x1="1522.4" y1="281.9" x2="1522.4" y2="308" stroke="#2f6fa8" stroke-width="1.8"/><line x1="1583.5" y1="281.9" x2="1583.5" y2="308" stroke="#d98a10" stroke-width="1.8"/><line x1="1646.8" y1="281.9" x2="1646.8" y2="308" stroke="#2f6fa8" stroke-width="1.8"/><line x1="1713.9" y1="281.9" x2="1713.9" y2="308" stroke="#d98a10" stroke-width="1.8"/><line x1="1780.4" y1="281.9" x2="1780.4" y2="308" stroke="#5d4fa6" stroke-width="1.8"/><path d="M1342.3 199H1384" stroke="#111" stroke-width="2.3" stroke-dasharray="0.1 8.1" stroke-linecap="round" fill="none"/><circle cx="1493.8" cy="157.3" r="21.6" fill="#ffffff" stroke="#34495e" stroke-width="1.9"/><text x="1493.8" y="160.20000000000002" font-size="8.3" fill="#34495e" text-anchor="middle" font-weight="bold" font-family="Liberation Sans, sans-serif">ROOT</text><circle cx="1406.3" cy="197.8" r="15.6" fill="#2f87cd" stroke="#e2921c" stroke-width="0.9"/><text x="1406.3" y="200.8" font-size="8.8" fill="#d9ecfb" text-anchor="middle" font-weight="normal" font-family="Liberation Sans, sans-serif">J=50</text><circle cx="1586.3" cy="197.8" r="15.6" fill="#2f87cd" stroke="#e2921c" stroke-width="0.9"/><text x="1586.3" y="200.8" font-size="8.8" fill="#d9ecfb" text-anchor="middle" font-weight="normal" font-family="Liberation Sans, sans-serif">J=66</text><circle cx="1745.8" cy="197.8" r="15.6" fill="#5d4fa6" stroke="#e2921c" stroke-width="0.9"/><text x="1745.8" y="200.8" font-size="8.8" fill="#e6e0f7" text-anchor="middle" font-weight="normal" font-family="Liberation Sans, sans-serif">J=0</text><circle cx="1368.8" cy="241.1" r="15.9" fill="#2f87cd"/><text x="1368.8" y="244.1" font-size="8.8" fill="#d9ecfb" text-anchor="middle" font-weight="normal" font-family="Liberation Sans, sans-serif">E=0.86</text><circle cx="1441.1" cy="241.1" r="15.6" fill="#2f87cd" stroke="#e2921c" stroke-width="0.9"/><text x="1441.1" y="244.1" font-size="8.8" fill="#d9ecfb" text-anchor="middle" font-weight="normal" font-family="Liberation Sans, sans-serif">E=0.99</text><circle cx="1551.5" cy="241.1" r="15.9" fill="#2f87cd"/><text x="1551.5" y="244.1" font-size="8.8" fill="#d9ecfb" text-anchor="middle" font-weight="normal" font-family="Liberation Sans, sans-serif">E=0.88</text><circle cx="1615.5" cy="241.1" r="15.6" fill="#2f87cd" stroke="#e2921c" stroke-width="0.9"/><text x="1615.5" y="244.1" font-size="8.8" fill="#d9ecfb" text-anchor="middle" font-weight="normal" font-family="Liberation Sans, sans-serif">E=0.99</text><circle cx="1745.8" cy="241.1" r="15.6" fill="#5d4fa6" stroke="#e2921c" stroke-width="0.9"/><text x="1745.8" y="244.1" font-size="8.8" fill="#e6e0f7" text-anchor="middle" font-weight="normal" font-family="Liberation Sans, sans-serif">E=0.99</text><circle cx="1368.8" cy="281.9" r="15.9" fill="#2f87cd"/><text x="1368.8" y="284.9" font-size="8.8" fill="#d9ecfb" text-anchor="middle" font-weight="normal" font-family="Liberation Sans, sans-serif">S=60</text><circle cx="1441.1" cy="281.9" r="15.6" fill="#2f87cd" stroke="#e2921c" stroke-width="0.9"/><text x="1441.1" y="284.9" font-size="8.8" fill="#d9ecfb" text-anchor="middle" font-weight="normal" font-family="Liberation Sans, sans-serif">S=44</text><circle cx="1522.4" cy="281.9" r="15.9" fill="#2f87cd"/><text x="1522.4" y="284.9" font-size="8.8" fill="#d9ecfb" text-anchor="middle" font-weight="normal" font-family="Liberation Sans, sans-serif">S=51</text><circle cx="1583.5" cy="281.9" r="15.6" fill="#2f87cd" stroke="#e2921c" stroke-width="0.9"/><text x="1583.5" y="284.9" font-size="8.8" fill="#d9ecfb" text-anchor="middle" font-weight="normal" font-family="Liberation Sans, sans-serif">S=57</text><circle cx="1646.8" cy="281.9" r="15.9" fill="#2f87cd"/><text x="1646.8" y="284.9" font-size="8.8" fill="#d9ecfb" text-anchor="middle" font-weight="normal" font-family="Liberation Sans, sans-serif">S=77</text><circle cx="1713.9" cy="281.9" r="15.6" fill="#5d4fa6" stroke="#e2921c" stroke-width="0.9"/><text x="1713.9" y="284.9" font-size="8.8" fill="#e6e0f7" text-anchor="middle" font-weight="normal" font-family="Liberation Sans, sans-serif">S=44</text><circle cx="1780.4" cy="281.9" r="15.9" fill="#5d4fa6"/><text x="1780.4" y="284.9" font-size="8.8" fill="#e6e0f7" text-anchor="middle" font-weight="normal" font-family="Liberation Sans, sans-serif">S=51</text><circle cx="1544.2" cy="157.0" r="5.8" fill="#fff" stroke="#c49a2c" stroke-width="0.9"/><text x="1544.2" y="159.5" font-size="7.2" fill="#111" text-anchor="middle" font-weight="bold" font-family="Liberation Sans, sans-serif">1</text><circle cx="1535.5" cy="184.7" r="5.8" fill="#fff" stroke="#c49a2c" stroke-width="0.9"/><text x="1535.5" y="187.2" font-size="7.2" fill="#111" text-anchor="middle" font-weight="bold" font-family="Liberation Sans, sans-serif">2</text><circle cx="1451.8" cy="184.7" r="5.8" fill="#fff" stroke="#c49a2c" stroke-width="0.9"/><text x="1451.8" y="187.2" font-size="7.2" fill="#111" text-anchor="middle" font-weight="bold" font-family="Liberation Sans, sans-serif">3</text><rect x="1332.9" y="307.2" width="72.1" height="26.6" rx="2.2" fill="#5caee3"/><text x="1368.95" y="313.9" font-size="6.85" fill="#eef4fa" text-anchor="middle" font-weight="bold" font-family="Liberation Serif, serif">Fare per ticket is the</text><text x="1368.95" y="322.7" font-size="6.85" fill="#eef4fa" text-anchor="middle" font-weight="bold" font-family="Liberation Serif, serif">formula for calculating</text><text x="1368.95" y="331.0" font-size="6.85" fill="#eef4fa" text-anchor="middle" font-weight="bold" font-family="Liberation Serif, serif">the fare</text><rect x="1414.4" y="307.2" width="54.6" height="26.6" rx="2.2" fill="#f0a332"/><text x="1441.7" y="313.9" font-size="6.85" fill="#eef4fa" text-anchor="middle" font-weight="bold" font-family="Liberation Serif, serif">For a journey, the</text><text x="1441.7" y="322.7" font-size="6.85" fill="#eef4fa" text-anchor="middle" font-weight="bold" font-family="Liberation Serif, serif">value will be per</text><text x="1441.7" y="331.0" font-size="6.85" fill="#eef4fa" text-anchor="middle" font-weight="bold" font-family="Liberation Serif, serif">ticket.</text><rect x="1495.1" y="307.2" width="54.7" height="26.6" rx="2.2" fill="#5caee3"/><text x="1522.4499999999998" y="313.9" font-size="6.85" fill="#eef4fa" text-anchor="middle" font-weight="bold" font-family="Liberation Serif, serif">It is per ticket for</text><text x="1522.4499999999998" y="322.7" font-size="6.85" fill="#eef4fa" text-anchor="middle" font-weight="bold" font-family="Liberation Serif, serif">the travel</text><text x="1522.4499999999998" y="331.0" font-size="6.85" fill="#eef4fa" text-anchor="middle" font-weight="bold" font-family="Liberation Serif, serif">amongst points</text><rect x="1556.3" y="307.2" width="54.5" height="26.6" rx="2.2" fill="#f0a332"/><text x="1583.55" y="318.5" font-size="6.85" fill="#eef4fa" text-anchor="middle" font-weight="bold" font-family="Liberation Serif, serif">It is cost per</text><text x="1583.55" y="326.6" font-size="6.85" fill="#eef4fa" text-anchor="middle" font-weight="bold" font-family="Liberation Serif, serif">ticket for the trip</text><rect x="1619.9" y="307.2" width="53.6" height="26.6" rx="2.2" fill="#5caee3"/><text x="1646.7" y="318.5" font-size="6.85" fill="#eef4fa" text-anchor="middle" font-weight="bold" font-family="Liberation Serif, serif">Fare is per ticket</text><text x="1646.7" y="326.6" font-size="6.85" fill="#eef4fa" text-anchor="middle" font-weight="bold" font-family="Liberation Serif, serif">for the ride.</text><rect x="1686.8" y="307.2" width="54.9" height="26.6" rx="2.2" fill="#f0a332"/><text x="1714.25" y="318.5" font-size="6.85" fill="#eef4fa" text-anchor="middle" font-weight="bold" font-family="Liberation Serif, serif">Fare for journey</text><text x="1714.25" y="326.6" font-size="6.85" fill="#eef4fa" text-anchor="middle" font-weight="bold" font-family="Liberation Serif, serif">ticket.</text><rect x="1750.4" y="307.2" width="55.2" height="26.6" rx="2.2" fill="#a99bd9"/><text x="1778.0" y="313.9" font-size="6.85" fill="#eef4fa" text-anchor="middle" font-weight="bold" font-family="Liberation Serif, serif">The fare for the</text><text x="1778.0" y="322.7" font-size="6.85" fill="#eef4fa" text-anchor="middle" font-weight="bold" font-family="Liberation Serif, serif">journey is per</text><text x="1778.0" y="331.0" font-size="6.85" fill="#eef4fa" text-anchor="middle" font-weight="bold" font-family="Liberation Serif, serif">ticket.</text><text x="1294.6" y="194.8" font-size="8.75" fill="#1d1d1d" text-anchor="middle" font-weight="normal" font-family="Liberation Sans, sans-serif">Step 2: BF right-left</text><text x="1294.6" y="205.6" font-size="8.75" fill="#1d1d1d" text-anchor="middle" font-weight="normal" font-family="Liberation Sans, sans-serif">traversal</text><text x="1294.6" y="238.4" font-size="8.75" fill="#1d1d1d" text-anchor="middle" font-weight="normal" font-family="Liberation Sans, sans-serif">Step 3: DF travesal using</text><text x="1294.6" y="279.6" font-size="8.75" fill="#1d1d1d" text-anchor="middle" font-weight="normal" font-family="Liberation Sans, sans-serif">Step 4: DF traversal</text><text x="1260.0" y="289.6" font-size="8.75" fill="#1d1d1d" text-anchor="start" font-weight="normal" font-family="Liberation Sans, sans-serif">using</text><text x="1270.6" y="250.4" font-family="Liberation Serif, serif" font-weight="bold" font-size="10.5" fill="#000"><tspan font-style="italic">f</tspan><tspan font-size="6.8" dy="1.6">sem</tspan><tspan dy="-1.6" dx="2"> =max</tspan></text><text x="1284" y="290.2" font-family="Liberation Serif, serif" font-weight="bold" font-size="10.5" fill="#000"><tspan font-style="italic">f</tspan><tspan font-size="6.8" dy="1.6">sim</tspan><tspan dy="-1.6" dx="1"> =min</tspan></text><text x="1690.4" y="168.8" font-size="8.7" fill="#7877b6" text-anchor="start" font-weight="normal" font-family="Liberation Sans, sans-serif">Step 1: select syntax parapharase</text></svg>
<div class="t" style="left:1245.00px;top:346.30px;line-height:20px;font-size:15.85px;font-family:'Liberation Serif',serif;word-spacing:1.296px;color:#000;-webkit-text-stroke:0.2px #000;"><span class="k">Fig. 3.1 Ranking paraphrases of </span><span class="k it">Fare per ticket for journey</span><span class="k"> using a tree.  Top level node</span></div>
<div class="t" style="left:1245.00px;top:365.50px;line-height:20px;font-size:15.85px;font-family:'Liberation Serif',serif;word-spacing:0.399px;color:#000;-webkit-text-stroke:0.2px #000;"><span class="k">split is by Jaccard distance (</span><span class="k it">J</span><span class="k">), middle nodes split by entailment score (</span><span class="k it">E</span><span class="k">) and leave nodes</span></div>
<div class="t" style="left:1245.00px;top:384.80px;line-height:20px;font-size:15.85px;font-family:'Liberation Serif',serif;word-spacing:2.350px;color:#000;-webkit-text-stroke:0.2px #000;"><span class="k">store string similarities (</span><span class="k it">S</span><span class="k">). Here </span><span class="k it">f</span></div>
<div class="t" style="left:1499.60px;top:384.80px;line-height:20px;font-size:15.85px;font-family:'Liberation Serif',serif;word-spacing:0.718px;color:#000;-webkit-text-stroke:0.2px #000;"><span class="k">= [None, max, min]. By using </span><span class="k it">J</span><span class="k"> we guarantee that</span></div>
<div class="t" style="left:1472.00px;top:389.40px;line-height:20px;font-size:15.3px;font-family:'Liberation Serif',serif;letter-spacing:0.022px;color:#000;-webkit-text-stroke:0.2px #000;"><span class="k">dec</span></div>
<div class="t" style="left:1245.00px;top:403.80px;line-height:20px;font-size:15.85px;font-family:'Liberation Serif',serif;word-spacing:0.275px;color:#000;-webkit-text-stroke:0.2px #000;"><span class="k">candidates with </span><span class="k it">J</span><span class="k"> = 0 are syntactic paraphrases if </span><span class="k it">S</span><span class="k"> is constrained. Orange leaves show top</span></div>
<div class="t" style="left:1245.00px;top:423.40px;line-height:20px;font-size:15.85px;font-family:'Liberation Serif',serif;word-spacing:0.028px;color:#000;-webkit-text-stroke:0.2px #000;"><span class="k">ranked candidates. Numbers on paths show ranking order.</span></div>
<div class="t" style="left:1225.60px;top:943.60px;line-height:20px;font-size:15.85px;font-family:'Liberation Serif',serif;letter-spacing:-0.272px;color:#000;-webkit-text-stroke:0;"><span class="k tb">12</span></div>
<div class="t" style="left:1455.40px;top:943.60px;line-height:20px;font-size:15.85px;font-family:'Liberation Serif',serif;letter-spacing:-0.013px;color:#000;-webkit-text-stroke:0.2px #000;"><span class="k">Robust DST with tree-based generated schema ranking</span></div>
<div style="left:1225.8px;top:966.1px;width:578.2px;height:0.9px;background:#111;"></div>
<svg style="left:1149.4px;top:3px" width="2" height="17" viewBox="0 0 2 17"><path d="M1 0V17" stroke="#454545" stroke-width="1" stroke-dasharray="1 2.2"/></svg>
<svg style="left:1182.8px;top:3px" width="2" height="17" viewBox="0 0 2 17"><path d="M1 0V17" stroke="#454545" stroke-width="1" stroke-dasharray="1 2.2"/></svg>
<svg style="left:1238.8px;top:3px" width="2" height="17" viewBox="0 0 2 17"><path d="M1 0V17" stroke="#454545" stroke-width="1" stroke-dasharray="1 2.2"/></svg>
<svg style="left:1294.6px;top:3px" width="2" height="17" viewBox="0 0 2 17"><path d="M1 0V17" stroke="#454545" stroke-width="1" stroke-dasharray="1 2.2"/></svg>
<svg style="left:1465.5px;top:3px" width="2" height="17" viewBox="0 0 2 17"><path d="M1 0V17" stroke="#454545" stroke-width="1" stroke-dasharray="1 2.2"/></svg>
<svg style="left:1572.5px;top:3px" width="2" height="17" viewBox="0 0 2 17"><path d="M1 0V17" stroke="#454545" stroke-width="1" stroke-dasharray="1 2.2"/></svg>
<svg style="left:1159.5px;top:4.5px" width="14" height="14" viewBox="-7.0 -7.0 14 14"><rect x="-2.8" y="-3.2" width="5.8" height="6.8" rx="1" fill="none" stroke="#b0b0b0" stroke-width="0.9"/><path d="M-1.8 -4h3.6" stroke="#b0b0b0" stroke-width="1"/><path d="M2.2 -2.2V3" stroke="#a8463f" stroke-width="1"/></svg>
<svg style="left:1193.4px;top:4.5px" width="14" height="14" viewBox="-7.0 -7.0 14 14"><circle cx="-1.1" cy="-1.1" r="2.4" fill="none" stroke="#b4b4b4" stroke-width="0.9"/><path d="M0.8 0.8L3.6 3.6" stroke="#b4b4b4" stroke-width="1.1" stroke-linecap="round"/></svg>
<svg style="left:1216.8px;top:4.5px" width="14" height="14" viewBox="-7.0 -7.0 14 14"><path d="M-5 0H5M0 -5V5" stroke="#4f8fd0" stroke-width="1.1"/><path d="M-5 0l2 -1.8v3.6zM5 0l-2 -1.8v3.6zM0 -5l-1.8 2h3.6zM0 5l-1.8 -2h3.6z" fill="#4f8fd0"/></svg>
<svg style="left:1249.5px;top:4.5px" width="14" height="14" viewBox="-7.0 -7.0 14 14"><path d="M-4 0H4M-4 0l2.4 -2.2M-4 0l2.4 2.2" stroke="#585858" stroke-width="1" fill="none"/></svg>
<svg style="left:1272.4px;top:4.5px" width="14" height="14" viewBox="-7.0 -7.0 14 14"><path d="M-4 0H4M4 0l-2.4 -2.2M4 0l-2.4 2.2" stroke="#585858" stroke-width="1" fill="none"/></svg>
<svg style="left:1305.7px;top:4.5px" width="14" height="14" viewBox="-7.0 -7.0 14 14"><path d="M-3 -4V4" stroke="#7e7e7e" stroke-width="1.2"/><path d="M3.4 -4L-1.6 0L3.4 4Z" fill="none" stroke="#7e7e7e" stroke-width="1"/></svg>
<svg style="left:1328.8px;top:4.5px" width="14" height="14" viewBox="-7.0 -7.0 14 14"><path d="M2.4 -4L-2.6 0L2.4 4Z" fill="none" stroke="#7e7e7e" stroke-width="1"/></svg>
<svg style="left:1420.3px;top:4.5px" width="14" height="14" viewBox="-7.0 -7.0 14 14"><path d="M-2.4 -4L2.6 0L-2.4 4Z" fill="none" stroke="#7e7e7e" stroke-width="1"/></svg>
<svg style="left:1443.2px;top:4.5px" width="14" height="14" viewBox="-7.0 -7.0 14 14"><path d="M3 -4V4" stroke="#7e7e7e" stroke-width="1.2"/><path d="M-3.4 -4L1.6 0L-3.4 4Z" fill="none" stroke="#7e7e7e" stroke-width="1"/></svg>
<div class="t" style="left:1350.80px;top:3.60px;line-height:16px;font-size:14px;letter-spacing:-0.389px;color:#fff;-webkit-text-stroke:0.35px #fff;"><span class="w">27</span></div>
<div style="left:1349px;top:19.2px;width:20px;height:1px;background:#6a6a6a;"></div>
<div class="t" style="left:1377.30px;top:3.60px;line-height:16px;font-size:14px;letter-spacing:-0.244px;color:#fff;-webkit-text-stroke:0.35px #fff;"><span class="w">of</span></div>
<div class="t" style="left:1397.70px;top:3.60px;line-height:16px;font-size:14px;letter-spacing:0.111px;color:#fff;-webkit-text-stroke:0.35px #fff;"><span class="w">46</span></div>
<svg style="left:1476.1px;top:4.5px" width="14" height="14" viewBox="-7.0 -7.0 14 14"><circle cx="-1.1" cy="-1.1" r="2.4" fill="none" stroke="#a4a4a4" stroke-width="0.9"/><path d="M0.8 0.8L3.6 3.6" stroke="#a4a4a4" stroke-width="1.1" stroke-linecap="round"/><path d="M-2.3 -1.1h2.4M-1.1 -2.3v2.4" stroke="#a4a4a4" stroke-width="0.6"/></svg>
<svg style="left:1499.7px;top:4.5px" width="14" height="14" viewBox="-7.0 -7.0 14 14"><circle cx="0" cy="0" r="2.6" fill="none" stroke="#4f8fd0" stroke-width="1.2"/><path d="M0 -5V-2.6M0 5V2.6M-5 0H-2.6M5 0H2.6" stroke="#4f8fd0" stroke-width="1.2"/></svg>
<svg style="left:1521.5px;top:4.5px" width="14" height="14" viewBox="-7.0 -7.0 14 14"><path d="M-3 -4.4H1.2L3.4 -2.2V4.4H-3Z" fill="none" stroke="#b0b0b0" stroke-width="1"/><path d="M-1.4 0.6H1.8M-1.4 2.4H1.8" stroke="#4f8fd0" stroke-width="0.8"/></svg>
<svg style="left:1546.0px;top:4.5px" width="14" height="14" viewBox="-7.0 -7.0 14 14"><circle cx="-1.4" cy="-1.4" r="2.6" fill="none" stroke="#d8b840" stroke-width="1.1"/><path d="M0.6 0.6L4.2 4.2" stroke="#c8c8c8" stroke-width="1.5" stroke-linecap="round"/></svg>
<svg style="left:1833.0px;top:4.6px" width="14" height="14" viewBox="-7.0 -7.0 14 14"><path d="M-3.6 1.8L0 -1.6L3.6 1.8Z" fill="none" stroke="#c4c4c4" stroke-width="1"/></svg>
<svg style="left:1857.5px;top:4.6px" width="14" height="14" viewBox="-7.0 -7.0 14 14"><rect x="1" y="-3.6" width="2.2" height="7" fill="none" stroke="#d8d8d8" stroke-width="1"/><path d="M-3.6 1.6H-0.6" stroke="#b0b0b0" stroke-width="0.9" fill="none"/></svg>
<svg style="left:1879.5px;top:4.6px" width="14" height="14" viewBox="-7.0 -7.0 14 14"><rect x="-3.6" y="-2" width="5.6" height="5.8" fill="#3a3a3a" stroke="#d4d4d4" stroke-width="1"/><path d="M-2.4 -2V-3.8H4V2.6H2" fill="none" stroke="#b8c4d4" stroke-width="1"/></svg>
<svg style="left:1903.4px;top:5.5px" width="12" height="12" viewBox="-6.0 -6.0 12 12"><circle cx="0" cy="0" r="3.9" fill="#c62a20"/><path d="M-1.3 -1.3l2.6 2.6M1.3 -1.3l-2.6 2.6" stroke="#e06a60" stroke-width="0.8" fill="none"/></svg>
<div style="left:1138.2px;top:989.3px;width:18.8px;height:18.6px;background:#3b3b3b;border:1px solid #4f4f4f;"></div>
<div style="left:1163px;top:989.3px;width:18.8px;height:18.6px;background:#3b3b3b;border:1px solid #4f4f4f;"></div>
<svg style="left:1140.5px;top:991.6px" width="14" height="14" viewBox="-7.0 -7.0 14 14"><circle cx="-1.6" cy="-1.6" r="2.1" fill="none" stroke="#b8b8b8" stroke-width="0.8"/><path d="M-4.6 -1.6h6M-1.6 -4.6v6" stroke="#b8b8b8" stroke-width="0.6"/><path d="M2.6 -0.6V4M1.4 4h2.4M1.6 0.2l1 -0.8" stroke="#e0e0e0" stroke-width="1" fill="none"/></svg>
<svg style="left:1165.4px;top:991.6px" width="14" height="14" viewBox="-7.0 -7.0 14 14"><circle cx="1.6" cy="1.6" r="2.1" fill="none" stroke="#b8b8b8" stroke-width="0.8"/><path d="M-1.4 1.6h6M1.6 -1.4v6" stroke="#b8b8b8" stroke-width="0.6"/><path d="M-2.8 -4V-0.4M-4 -4h2.4M-4 -0.4h2.4" stroke="#e0e0e0" stroke-width="1" fill="none"/></svg>
<div class="t" style="left:1579.30px;top:991.60px;line-height:16px;font-size:13px;letter-spacing:0.256px;color:#f4f4f4;-webkit-text-stroke:0.3px #f4f4f4;"><span class="w">Pages 27 to 28 of 46</span></div>
<div style="left:1711.5px;top:986.3px;width:58.5px;height:25.4px;background:#393939;border:1px solid #4d4d4d;"></div>
<div class="t" style="left:1727.30px;top:991.40px;line-height:16px;font-size:13px;letter-spacing:0.223px;color:#f0f0f0;"><span class="w">72%</span></div>
<svg style="left:1759.7px;top:1002.6px" width="9" height="6" viewBox="-4.5 -3.0 9 6"><path d="M-3.3 -1.7L0 1.7L3.3 -1.7" fill="none" stroke="#dcdcdc" stroke-width="1.1" stroke-linecap="round" stroke-linejoin="round"/></svg>
<div style="left:1776px;top:989px;width:19px;height:18.8px;background:#3b3b3b;border:1px solid #4f4f4f;"></div>
<div style="left:1900.3px;top:989px;width:19px;height:18.8px;background:#3b3b3b;border:1px solid #4f4f4f;"></div>
<svg style="left:1778.6px;top:991.6px" width="14" height="14" viewBox="-7.0 -7.0 14 14"><circle cx="-1.1" cy="-1.1" r="2.4" fill="none" stroke="#8e8e8e" stroke-width="0.9"/><path d="M0.8 0.8L3.6 3.6" stroke="#8e8e8e" stroke-width="1.1" stroke-linecap="round"/></svg>
<svg style="left:1902.8px;top:991.6px" width="14" height="14" viewBox="-7.0 -7.0 14 14"><circle cx="-1.1" cy="-1.1" r="2.4" fill="none" stroke="#8e8e8e" stroke-width="0.9"/><path d="M0.8 0.8L3.6 3.6" stroke="#8e8e8e" stroke-width="1.1" stroke-linecap="round"/><path d="M-2.3 -1.1h2.4M-1.1 -2.3v2.4" stroke="#8e8e8e" stroke-width="0.6"/></svg>
<div style="left:1800px;top:994.6px;width:96px;height:3px;background:#3e3e3e;border-radius:1.5px;"></div>
<div style="left:1800px;top:994.4px;width:30px;height:3.4px;background:#2f5fe6;border-radius:1.7px;"></div>
<div style="left:1823.4px;top:986.2px;width:19.6px;height:19.6px;border-radius:50%;background:#8d8d8d"></div>
<div style="left:2px;top:1022px;width:22px;height:22px;background:#9c9c9c;"></div>
<div style="left:30px;top:1022px;width:22px;height:22px;background:#9c9c9c;"></div>
<svg style="left:6.8px;top:1027.0px" width="12" height="12" viewBox="-6.0 -6.0 12 12"><rect x="-4.8" y="-4.6" width="9.8" height="9.6" fill="#e4e4e4"/><rect x="-4.2" y="-4" width="3" height="8.4" fill="#3d62c0"/><rect x="-0.8" y="-3.8" width="4.8" height="4.8" fill="#2a2f34"/></svg>
<svg style="left:35.0px;top:1027.0px" width="12" height="12" viewBox="-6.0 -6.0 12 12"><rect x="-5" y="-4.6" width="10.4" height="9.6" fill="#ece6e6"/><rect x="-0.8" y="1.4" width="5" height="2.8" fill="#3d62c0"/><rect x="-0.8" y="-3.8" width="4.8" height="4.8" fill="#1f2c3c"/></svg>
<div class="t" style="left:1482.50px;top:1026.60px;line-height:8px;font-size:6.5px;color:#6c6c6c;text-decoration:line-through;-webkit-text-stroke:0;"><span class="dim">abc</span></div>
<div style="left:1502.4px;top:1020.4px;width:68.8px;height:27px;background:#393939;border:1px solid #4d4d4d;"></div>
<div class="t" style="left:1516.80px;top:1025.60px;line-height:16px;font-size:13px;letter-spacing:-0.217px;"><span class="w">en_GB</span></div>
<svg style="left:1560.1px;top:1037.8px" width="9" height="6" viewBox="-4.5 -3.0 9 6"><path d="M-3.3 -1.7L0 1.7L3.3 -1.7" fill="none" stroke="#dcdcdc" stroke-width="1.1" stroke-linecap="round" stroke-linejoin="round"/></svg>
<div style="left:1576.9px;top:1020.4px;width:64.2px;height:27px;background:#393939;border:1px solid #4d4d4d;"></div>
<div class="t" style="left:1586.20px;top:1025.60px;line-height:16px;font-size:13px;letter-spacing:0.271px;"><span class="w">UTF-8</span></div>
<svg style="left:1630.3px;top:1037.8px" width="9" height="6" viewBox="-4.5 -3.0 9 6"><path d="M-3.3 -1.7L0 1.7L3.3 -1.7" fill="none" stroke="#dcdcdc" stroke-width="1.1" stroke-linecap="round" stroke-linejoin="round"/></svg>
<div class="t" style="left:1650.40px;top:1025.60px;line-height:16px;font-size:13px;letter-spacing:-0.156px;color:#f4f4f4;-webkit-text-stroke:0.3px #f4f4f4;"><span class="w">Ready</span></div>
<div class="t" style="left:1701.60px;top:1025.60px;line-height:16px;font-size:13px;letter-spacing:0.199px;color:#f4f4f4;-webkit-text-stroke:0.3px #f4f4f4;"><span class="w">Automatic</span></div>
<svg style="left:1789.0px;top:1027.7px" width="10" height="11" viewBox="-5.0 -5.5 10 11"><path d="M-3.6 -4.6H3.6V4.8L0 2.4L-3.6 4.8Z" fill="#d8433a"/><path d="M-1.4 -2.4h2.8M-1.4 -0.4h2.8" stroke="#9a2a24" stroke-width="0.9"/></svg>
<svg style="left:1839.7px;top:1027.7px" width="10" height="11" viewBox="-5.0 -5.5 10 11"><path d="M-3.6 -4.6H3.6V4.8L0 2.4L-3.6 4.8Z" fill="#d8433a"/><path d="M-1.4 -2.4h2.8M-1.4 -0.4h2.8" stroke="#9a2a24" stroke-width="0.9"/></svg>
<svg style="left:1890.6px;top:1027.7px" width="10" height="11" viewBox="-5.0 -5.5 10 11"><path d="M-3.6 -4.6H3.6V4.8L0 2.4L-3.6 4.8Z" fill="#d8433a"/><path d="M-1.4 -2.4h2.8M-1.4 -0.4h2.8" stroke="#9a2a24" stroke-width="0.9"/></svg>
<div style="left:0px;top:24px;width:1px;height:990px;background:#4a4a4a;"></div>
<div style="left:23.4px;top:48px;width:0.8px;height:966px;background:#343434;"></div>
<svg style="left:5.0px;top:30.0px" width="14" height="14" viewBox="-7.0 -7.0 14 14"><rect x="-4.4" y="-4.6" width="2.6" height="2.6" fill="none" stroke="#dcdcdc" stroke-width="0.7"/><rect x="-1.6" y="-1.6" width="3" height="2.6" fill="none" stroke="#dcdcdc" stroke-width="0.7"/><rect x="1.6" y="-1.6" width="3" height="2.6" fill="none" stroke="#dcdcdc" stroke-width="0.7"/><rect x="-1.6" y="2" width="3" height="2.6" fill="none" stroke="#dcdcdc" stroke-width="0.7"/><path d="M-3.2 -2V3.2H-1.6" stroke="#dcdcdc" stroke-width="0.7" fill="none"/></svg>
<svg style="left:5.0px;top:55.0px" width="14" height="14" viewBox="-7.0 -7.0 14 14"><path d="M-2.6 -3.4H5M-0.8 0H4.4M1.8 3.4H5" stroke="#cfcfcf" stroke-width="0.9"/><path d="M-6 -3.4H-3.4M-4.4 0H-1.6M-1.4 3.4H0.8" stroke="#4a86d8" stroke-width="1.1"/></svg>
<svg style="left:6.0px;top:82.0px" width="12" height="14" viewBox="-6.0 -7.0 12 14"><path d="M-4 -5.8H4V5.8L0 2.6L-4 5.8Z" fill="#d9301c"/></svg>
<svg style="left:5.0px;top:108.0px" width="14" height="14" viewBox="-7.0 -7.0 14 14"><path d="M-5 -4.6H5M-1.8 -4.6V2.2Q-2 4.4 -4.6 4.8M1.8 -4.6V2.2Q2 4.4 4.6 4.8" stroke="#dcdcdc" stroke-width="0.85" fill="none"/></svg>
<svg style="left:5.0px;top:134.0px" width="14" height="14" viewBox="-7.0 -7.0 14 14"><path d="M-3 -4.6H-4.8V4.6H-3M3 -4.6H4.8V4.6H3" stroke="#9fb8ee" stroke-width="1" fill="none"/><path d="M-1.6 -3.6V3.6M1.6 -3.6V3.6" stroke="#5f86d8" stroke-width="1.1" stroke-dasharray="2.4 1.2"/></svg>
<div class="t" style="left:6.60px;top:162.30px;line-height:10px;font-size:8.6px;letter-spacing:-0.334px;color:#b3cfee;-webkit-text-stroke:0;"><span class="b">PS</span></div>
<div class="t" style="left:6.60px;top:188.30px;line-height:10px;font-size:8.6px;letter-spacing:-1.045px;color:#b3cfee;-webkit-text-stroke:0;"><span class="b">MP</span></div>
<div class="t" style="left:6.60px;top:214.30px;line-height:10px;font-size:8.6px;letter-spacing:0.150px;color:#b3cfee;-webkit-text-stroke:0;"><span class="b">TZ</span></div>
<div class="t" style="left:6.60px;top:240.30px;line-height:10px;font-size:8.6px;letter-spacing:-0.577px;color:#b3cfee;-webkit-text-stroke:0;"><span class="b">AS</span></div>
<div class="t" style="left:6.60px;top:292.30px;line-height:10px;font-size:8.6px;letter-spacing:-0.334px;color:#b3cfee;-webkit-text-stroke:0;"><span class="b">XY</span></div>
<svg style="left:5.0px;top:264.0px" width="14" height="14" viewBox="-7.0 -7.0 14 14"><rect x="-4.8" y="-4.6" width="8.6" height="5.4" fill="none" stroke="#d0d0d0" stroke-width="1"/><path d="M-3 -2.6H2.2" stroke="#d0d0d0" stroke-width="1"/><path d="M-0.6 1V4.4M1.4 1.4l2.2 3" stroke="#5a9a60" stroke-width="1"/></svg>
<svg style="left:5.0px;top:316.4px" width="14" height="14" viewBox="-7.0 -7.0 14 14"><rect x="-3.4" y="-5" width="7" height="6.4" fill="#5a4a66" stroke="#d8d0dc" stroke-width="1"/><path d="M-5 3.4H3.6" stroke="#e0a0c8" stroke-width="1.6"/><circle cx="3.4" cy="3.6" r="1.5" fill="#7aa0e0"/></svg>
<svg style="left:412.0px;top:6.6px" width="12" height="12" viewBox="-6.0 -6.0 12 12"><path d="M-3.6 0H4M-3.6 0l2.2 -2M-3.6 0l2.2 2" stroke="#cfcfcf" stroke-width="0.8" fill="none"/></svg>
<svg style="left:412.0px;top:32.4px" width="12" height="12" viewBox="-6.0 -6.0 12 12"><path d="M-4 0H3.6M3.6 0l-2.2 -2M3.6 0l-2.2 2" stroke="#555" stroke-width="0.8" fill="none"/></svg>
<svg style="left:409px;top:55.8px" width="19" height="2" viewBox="0 0 19 2"><path d="M0 1H19" stroke="#505050" stroke-width="1" stroke-dasharray="1 2.2"/></svg>
<svg style="left:409px;top:221.4px" width="19" height="2" viewBox="0 0 19 2"><path d="M0 1H19" stroke="#505050" stroke-width="1" stroke-dasharray="1 2.2"/></svg>
<svg style="left:409px;top:258.4px" width="19" height="2" viewBox="0 0 19 2"><path d="M0 1H19" stroke="#505050" stroke-width="1" stroke-dasharray="1 2.2"/></svg>
<div class="t" style="left:414.60px;top:69.40px;line-height:12px;font-size:9.5px;color:#fff;-webkit-text-stroke:0.3px #fff;"><span class="b">B</span></div>
<div class="t" style="left:416.20px;top:95.00px;line-height:12px;font-size:10.5px;font-family:'Liberation Serif',serif;color:#e8e8e8;"><span class="it">I</span></div>
<div class="t" style="left:414.80px;top:120.80px;line-height:12px;font-size:9.5px;color:#e0e0e0;"><span class="w">U</span></div>
<div style="left:414.6px;top:131.6px;width:7px;height:0.9px;background:#8a8a8a;"></div>
<svg style="left:412.0px;top:147.0px" width="12" height="12" viewBox="-6.0 -6.0 12 12"><path d="M-5 -4.3H5M-5 0H3M-5 4.3H5" stroke="#c8c8c8" stroke-width="1.3"/></svg>
<svg style="left:412.0px;top:172.6px" width="12" height="12" viewBox="-6.0 -6.0 12 12"><path d="M-5 -4.3H5M-3.4 0H3.4M-5 4.3H5" stroke="#c8c8c8" stroke-width="1.3"/></svg>
<svg style="left:412.0px;top:198.6px" width="12" height="12" viewBox="-6.0 -6.0 12 12"><path d="M-5 -4.3H5M-3 0H5M-5 4.3H5" stroke="#c8c8c8" stroke-width="1.3"/></svg>
<svg style="left:412.4px;top:235.0px" width="12" height="12" viewBox="-6.0 -6.0 12 12"><rect x="-4.2" y="-4.4" width="8.6" height="8.8" fill="none" stroke="#c8c8c8" stroke-width="1"/><path d="M-4.2 -1.6H4.4" stroke="#c8c8c8" stroke-width="0.8"/><path d="M-3 0.4H3.2V3.2H-3Z" fill="#a84840"/></svg>
<div class="t" style="left:411.60px;top:270.00px;line-height:14px;font-size:13px;font-family:'Liberation Serif',serif;color:#6fa8ea;"><span class="it">f</span></div>
<div class="t" style="left:416.60px;top:273.00px;line-height:12px;font-size:10px;font-family:'Liberation Serif',serif;color:#6fa8ea;"><span class="it">x</span></div>
<div class="t" style="left:413.60px;top:296.00px;line-height:12px;font-size:9px;color:#e0e0e0;"><span class="b">x</span></div>
<div class="t" style="left:419.20px;top:301.50px;line-height:7px;font-size:5.5px;color:#c8c8c8;-webkit-text-stroke:0;"><span class="w">2</span></div>
<div class="t" style="left:413.60px;top:322.40px;line-height:12px;font-size:9px;color:#e0e0e0;"><span class="b">x</span></div>
<div class="t" style="left:419.20px;top:321.50px;line-height:7px;font-size:5.5px;color:#c8c8c8;-webkit-text-stroke:0;"><span class="w">2</span></div>
<div class="t" style="left:416.20px;top:347.10px;line-height:7px;font-size:5.5px;color:#7a7a7a;-webkit-text-stroke:0;"><span class="w">x</span></div>
<div style="left:415.4px;top:354.2px;width:4.6px;height:0.8px;background:#7a7a7a;"></div>
<div class="t" style="left:416.20px;top:354.70px;line-height:7px;font-size:5.5px;color:#7a7a7a;-webkit-text-stroke:0;"><span class="w">y</span></div>
<div class="t" style="left:416.20px;top:373.10px;line-height:7px;font-size:5.5px;color:#6a6a6a;-webkit-text-stroke:0;"><span class="w">x</span></div>
<div style="left:414.4px;top:380.2px;width:7px;height:0.8px;background:#6a6a6a;"></div>
<div class="t" style="left:416.20px;top:380.90px;line-height:7px;font-size:5.5px;color:#6a6a6a;-webkit-text-stroke:0;"><span class="w">y</span></div>
<div class="t" style="left:417.60px;top:401.40px;line-height:12px;font-size:10px;color:#e4e4e4;"><span class="w">2</span></div>
<svg style="left:411px;top:401px" width="14" height="12" viewBox="0 0 14 12"><path d="M0.6 6.6L2 6L3.8 10.4L6 1.2H12.4" fill="none" stroke="#5f8fd0" stroke-width="0.9"/></svg>
<svg style="left:719.4px;top:434.3px" width="9.2" height="4" viewBox="0 0 9.2 4"><path d="M1.0 1.0 L3.0 3.0 L5.0 1.0 L7.0 3.0" fill="none" stroke="#d8b82a" stroke-width="0.9" stroke-linejoin="round"/></svg>
<svg style="left:876.5px;top:464.8px" width="52.5" height="4" viewBox="0 0 52.5 4"><path d="M1.0 1.0 L3.0 3.0 L5.0 1.0 L7.0 3.0 L9.0 1.0 L11.0 3.0 L13.0 1.0 L15.0 3.0 L17.0 1.0 L19.0 3.0 L21.0 1.0 L23.0 3.0 L25.0 1.0 L27.0 3.0 L29.0 1.0 L31.0 3.0 L33.0 1.0 L35.0 3.0 L37.0 1.0 L39.0 3.0 L41.0 1.0 L43.0 3.0 L45.0 1.0 L47.0 3.0 L49.0 1.0 L51.0 3.0" fill="none" stroke="#d8b82a" stroke-width="0.9" stroke-linejoin="round"/></svg>
<svg style="left:944.0px;top:648.4px" width="79.5" height="4" viewBox="0 0 79.5 4"><path d="M1.0 1.0 L3.0 3.0 L5.0 1.0 L7.0 3.0 L9.0 1.0 L11.0 3.0 L13.0 1.0 L15.0 3.0 L17.0 1.0 L19.0 3.0 L21.0 1.0 L23.0 3.0 L25.0 1.0 L27.0 3.0 L29.0 1.0 L31.0 3.0 L33.0 1.0 L35.0 3.0 L37.0 1.0 L39.0 3.0 L41.0 1.0 L43.0 3.0 L45.0 1.0 L47.0 3.0 L49.0 1.0 L51.0 3.0 L53.0 1.0 L55.0 3.0 L57.0 1.0 L59.0 3.0 L61.0 1.0 L63.0 3.0 L65.0 1.0 L67.0 3.0 L69.0 1.0 L71.0 3.0 L73.0 1.0 L75.0 3.0 L77.0 1.0" fill="none" stroke="#d8245a" stroke-width="0.9" stroke-linejoin="round"/></svg>
<svg style="left:481.5px;top:663.6px" width="78.5" height="4" viewBox="0 0 78.5 4"><path d="M1.0 1.0 L3.0 3.0 L5.0 1.0 L7.0 3.0 L9.0 1.0 L11.0 3.0 L13.0 1.0 L15.0 3.0 L17.0 1.0 L19.0 3.0 L21.0 1.0 L23.0 3.0 L25.0 1.0 L27.0 3.0 L29.0 1.0 L31.0 3.0 L33.0 1.0 L35.0 3.0 L37.0 1.0 L39.0 3.0 L41.0 1.0 L43.0 3.0 L45.0 1.0 L47.0 3.0 L49.0 1.0 L51.0 3.0 L53.0 1.0 L55.0 3.0 L57.0 1.0 L59.0 3.0 L61.0 1.0 L63.0 3.0 L65.0 1.0 L67.0 3.0 L69.0 1.0 L71.0 3.0 L73.0 1.0 L75.0 3.0 L77.0 1.0" fill="none" stroke="#d8245a" stroke-width="0.9" stroke-linejoin="round"/></svg>
<svg style="left:785.8px;top:678.8px" width="82.7" height="4" viewBox="0 0 82.7 4"><path d="M1.0 1.0 L3.0 3.0 L5.0 1.0 L7.0 3.0 L9.0 1.0 L11.0 3.0 L13.0 1.0 L15.0 3.0 L17.0 1.0 L19.0 3.0 L21.0 1.0 L23.0 3.0 L25.0 1.0 L27.0 3.0 L29.0 1.0 L31.0 3.0 L33.0 1.0 L35.0 3.0 L37.0 1.0 L39.0 3.0 L41.0 1.0 L43.0 3.0 L45.0 1.0 L47.0 3.0 L49.0 1.0 L51.0 3.0 L53.0 1.0 L55.0 3.0 L57.0 1.0 L59.0 3.0 L61.0 1.0 L63.0 3.0 L65.0 1.0 L67.0 3.0 L69.0 1.0 L71.0 3.0 L73.0 1.0 L75.0 3.0 L77.0 1.0 L79.0 3.0 L81.0 1.0" fill="none" stroke="#d8245a" stroke-width="0.9" stroke-linejoin="round"/></svg>
<svg style="left:929.8px;top:678.8px" width="68.7" height="4" viewBox="0 0 68.7 4"><path d="M1.0 1.0 L3.0 3.0 L5.0 1.0 L7.0 3.0 L9.0 1.0 L11.0 3.0 L13.0 1.0 L15.0 3.0 L17.0 1.0 L19.0 3.0 L21.0 1.0 L23.0 3.0 L25.0 1.0 L27.0 3.0 L29.0 1.0 L31.0 3.0 L33.0 1.0 L35.0 3.0 L37.0 1.0 L39.0 3.0 L41.0 1.0 L43.0 3.0 L45.0 1.0 L47.0 3.0 L49.0 1.0 L51.0 3.0 L53.0 1.0 L55.0 3.0 L57.0 1.0 L59.0 3.0 L61.0 1.0 L63.0 3.0 L65.0 1.0 L67.0 3.0" fill="none" stroke="#d8245a" stroke-width="0.9" stroke-linejoin="round"/></svg>
</div>
</body></html>
